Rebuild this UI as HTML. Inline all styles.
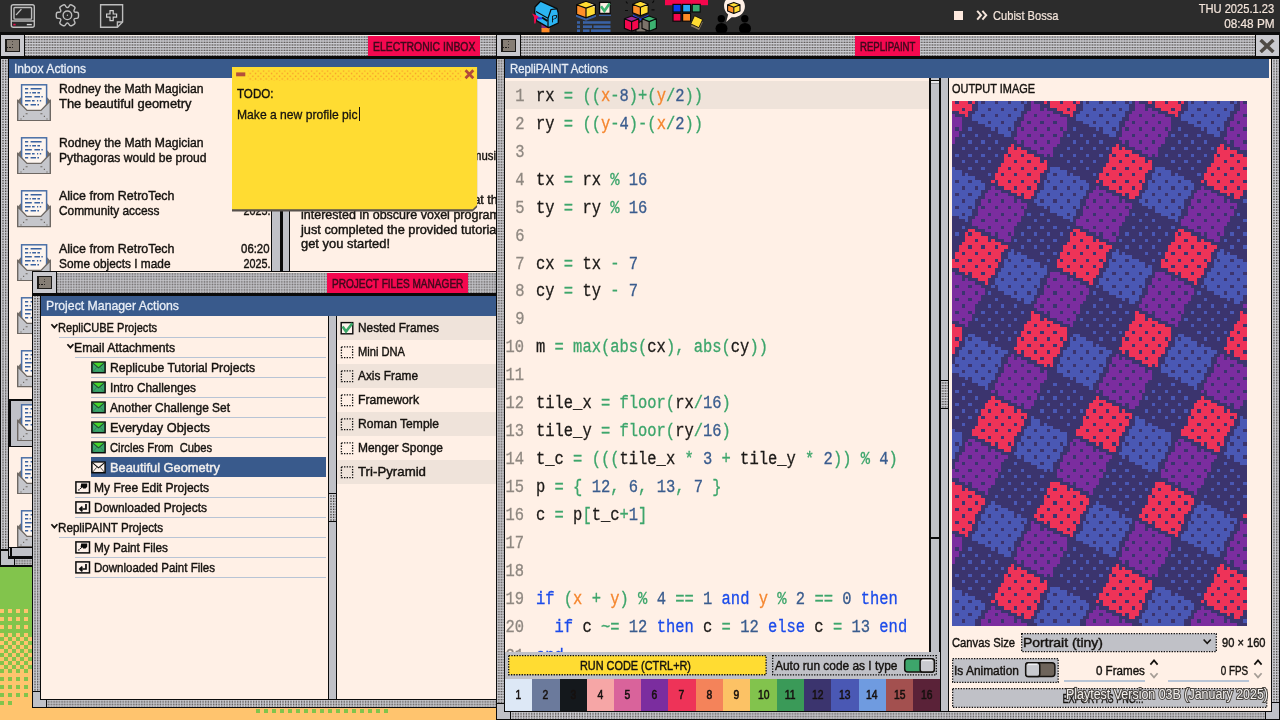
<!DOCTYPE html>
<html lang="en"><head><meta charset="utf-8"><title>Replicube desktop</title>
<style>
html,body{margin:0;padding:0}
body{width:1280px;height:720px;overflow:hidden;position:relative;background:#ffc46e;font-family:'Liberation Sans',sans-serif}
#r{position:absolute;left:0;top:0;width:1280px;height:720px;overflow:hidden;will-change:transform}
#r div,#r span.t,#r svg{position:absolute}
#r span.t{white-space:pre;display:block}
.cd span{white-space:pre}
</style></head>
<body><div id="r">
<svg width="0" height="0" style="left:0;top:0"><defs><pattern id="dp" width="8" height="8" patternUnits="userSpaceOnUse"><rect width="8" height="8" fill="#cacacf"/><rect x="1.333" y="1.333" width="1.333" height="1.333" fill="#423e3b"/><rect x="1.333" y="4.000" width="1.333" height="1.333" fill="#423e3b"/><rect x="1.333" y="6.667" width="1.333" height="1.333" fill="#423e3b"/><rect x="4.000" y="1.333" width="1.333" height="1.333" fill="#423e3b"/><rect x="4.000" y="4.000" width="1.333" height="1.333" fill="#423e3b"/><rect x="4.000" y="6.667" width="1.333" height="1.333" fill="#423e3b"/><rect x="6.667" y="1.333" width="1.333" height="1.333" fill="#423e3b"/><rect x="6.667" y="4.000" width="1.333" height="1.333" fill="#423e3b"/><rect x="6.667" y="6.667" width="1.333" height="1.333" fill="#423e3b"/></pattern></defs></svg>
<div style="left:0px;top:560px;width:500px;height:160px;background:#82c44c;"></div>
<div style="left:0px;top:637px;width:500px;height:100px;background:#ffc46e;"></div>
<svg style="left:0;top:600px" width="500" height="120" viewBox="0 600 500 120" shape-rendering="crispEdges"><rect x="0" y="609" width="4" height="4" fill="#ffc46e"/><rect x="8" y="609" width="4" height="4" fill="#ffc46e"/><rect x="16" y="609" width="4" height="4" fill="#ffc46e"/><rect x="24" y="609" width="4" height="4" fill="#ffc46e"/><rect x="0" y="617" width="4" height="4" fill="#ffc46e"/><rect x="8" y="617" width="4" height="4" fill="#ffc46e"/><rect x="16" y="617" width="4" height="4" fill="#ffc46e"/><rect x="24" y="617" width="4" height="4" fill="#ffc46e"/><rect x="0" y="625" width="4" height="4" fill="#ffc46e"/><rect x="8" y="625" width="4" height="4" fill="#ffc46e"/><rect x="16" y="625" width="4" height="4" fill="#ffc46e"/><rect x="24" y="625" width="4" height="4" fill="#ffc46e"/><rect x="0" y="633" width="4" height="4" fill="#ffc46e"/><rect x="8" y="633" width="4" height="4" fill="#ffc46e"/><rect x="16" y="633" width="4" height="4" fill="#ffc46e"/><rect x="24" y="633" width="4" height="4" fill="#ffc46e"/><rect x="0" y="637" width="4" height="4" fill="#82c44c"/><rect x="8" y="637" width="4" height="4" fill="#82c44c"/><rect x="16" y="637" width="4" height="4" fill="#82c44c"/><rect x="24" y="637" width="4" height="4" fill="#82c44c"/><rect x="4" y="641" width="4" height="4" fill="#82c44c"/><rect x="12" y="641" width="4" height="4" fill="#82c44c"/><rect x="20" y="641" width="4" height="4" fill="#82c44c"/><rect x="28" y="641" width="4" height="4" fill="#82c44c"/><rect x="0" y="645" width="4" height="4" fill="#82c44c"/><rect x="8" y="645" width="4" height="4" fill="#82c44c"/><rect x="16" y="645" width="4" height="4" fill="#82c44c"/><rect x="24" y="645" width="4" height="4" fill="#82c44c"/><rect x="4" y="649" width="4" height="4" fill="#82c44c"/><rect x="12" y="649" width="4" height="4" fill="#82c44c"/><rect x="20" y="649" width="4" height="4" fill="#82c44c"/><rect x="28" y="649" width="4" height="4" fill="#82c44c"/><rect x="0" y="653" width="4" height="4" fill="#82c44c"/><rect x="8" y="653" width="4" height="4" fill="#82c44c"/><rect x="16" y="653" width="4" height="4" fill="#82c44c"/><rect x="24" y="653" width="4" height="4" fill="#82c44c"/><rect x="4" y="657" width="4" height="4" fill="#82c44c"/><rect x="12" y="657" width="4" height="4" fill="#82c44c"/><rect x="20" y="657" width="4" height="4" fill="#82c44c"/><rect x="28" y="657" width="4" height="4" fill="#82c44c"/><rect x="0" y="661" width="4" height="4" fill="#82c44c"/><rect x="8" y="661" width="4" height="4" fill="#82c44c"/><rect x="16" y="661" width="4" height="4" fill="#82c44c"/><rect x="24" y="661" width="4" height="4" fill="#82c44c"/><rect x="4" y="665" width="4" height="4" fill="#82c44c"/><rect x="12" y="665" width="4" height="4" fill="#82c44c"/><rect x="20" y="665" width="4" height="4" fill="#82c44c"/><rect x="28" y="665" width="4" height="4" fill="#82c44c"/><rect x="0" y="669" width="4" height="4" fill="#82c44c"/><rect x="8" y="669" width="4" height="4" fill="#82c44c"/><rect x="16" y="669" width="4" height="4" fill="#82c44c"/><rect x="24" y="669" width="4" height="4" fill="#82c44c"/><rect x="0" y="677" width="4" height="4" fill="#82c44c"/><rect x="8" y="677" width="4" height="4" fill="#82c44c"/><rect x="16" y="677" width="4" height="4" fill="#82c44c"/><rect x="24" y="677" width="4" height="4" fill="#82c44c"/><rect x="0" y="685" width="4" height="4" fill="#82c44c"/><rect x="8" y="685" width="4" height="4" fill="#82c44c"/><rect x="16" y="685" width="4" height="4" fill="#82c44c"/><rect x="24" y="685" width="4" height="4" fill="#82c44c"/><rect x="0" y="693" width="4" height="4" fill="#82c44c"/><rect x="8" y="693" width="4" height="4" fill="#82c44c"/><rect x="16" y="693" width="4" height="4" fill="#82c44c"/><rect x="24" y="693" width="4" height="4" fill="#82c44c"/><rect x="0" y="701" width="4" height="4" fill="#82c44c"/><rect x="8" y="701" width="4" height="4" fill="#82c44c"/><rect x="256" y="709" width="4" height="3.6" fill="#82c44c"/><rect x="264" y="709" width="4" height="3.6" fill="#82c44c"/><rect x="272" y="709" width="4" height="3.6" fill="#82c44c"/><rect x="280" y="709" width="4" height="3.6" fill="#82c44c"/><rect x="288" y="709" width="4" height="3.6" fill="#82c44c"/><rect x="296" y="709" width="4" height="3.6" fill="#82c44c"/><rect x="304" y="709" width="4" height="3.6" fill="#82c44c"/><rect x="312" y="709" width="4" height="3.6" fill="#82c44c"/><rect x="320" y="709" width="4" height="3.6" fill="#82c44c"/><rect x="328" y="709" width="4" height="3.6" fill="#82c44c"/><rect x="336" y="709" width="4" height="3.6" fill="#82c44c"/><rect x="344" y="709" width="4" height="3.6" fill="#82c44c"/><rect x="352" y="709" width="4" height="3.6" fill="#82c44c"/><rect x="360" y="709" width="4" height="3.6" fill="#82c44c"/><rect x="368" y="709" width="4" height="3.6" fill="#82c44c"/><rect x="376" y="709" width="4" height="3.6" fill="#82c44c"/><rect x="384" y="709" width="4" height="3.6" fill="#82c44c"/></svg>
<div style="left:0px;top:0px;width:1280px;height:32.2px;background:#2c2c2c;"></div>
<div style="left:0px;top:32.2px;width:1280px;height:2.5px;background:#0b0b0b;"></div>
<svg style="left:8px;top:0" width="32" height="32" viewBox="8 0 32 32" fill="none" stroke="#bdbdbd" stroke-width="1.4">
<rect x="11.3" y="4.7" width="23" height="22.6" rx="2"/><path d="M11.3 21H34.3"/><rect x="14" y="7.5" width="17.6" height="11.6" rx="0.8"/>
<path d="M16.4 14.6L21 9.6" stroke-linecap="round"/><path d="M26.8 24.6H31.8" stroke="#d8d8d8"/><path d="M13.3 24.6H15.6" stroke="#e8104e" stroke-width="1.6"/></svg>
<svg style="left:52px;top:0" width="32" height="32" viewBox="52 0 32 32" fill="none" stroke="#bdbdbd" stroke-width="1.4" stroke-linejoin="round">
<path d="M76.99 12.25Q78.51 12.32 78.51 14.59L78.51 16.01Q78.51 18.28 76.99 18.35L76.04 18.40Q74.53 18.47 74.22 19.01L74.02 19.35Q73.71 19.88 74.40 21.23L74.84 22.08Q75.53 23.43 73.57 24.56L72.34 25.28Q70.38 26.41 69.56 25.13L69.04 24.33Q68.22 23.06 67.60 23.06L67.20 23.06Q66.58 23.06 65.76 24.33L65.24 25.13Q64.42 26.41 62.46 25.28L61.23 24.56Q59.27 23.43 59.96 22.08L60.40 21.23Q61.09 19.88 60.78 19.35L60.58 19.01Q60.27 18.47 58.76 18.40L57.81 18.35Q56.29 18.28 56.29 16.01L56.29 14.59Q56.29 12.32 57.81 12.25L58.76 12.20Q60.27 12.13 60.58 11.59L60.78 11.25Q61.09 10.72 60.40 9.37L59.96 8.52Q59.27 7.17 61.23 6.04L62.46 5.32Q64.42 4.19 65.24 5.47L65.76 6.27Q66.58 7.54 67.20 7.54L67.60 7.54Q68.22 7.54 69.04 6.27L69.56 5.47Q70.38 4.19 72.34 5.32L73.57 6.04Q75.53 7.17 74.84 8.52L74.40 9.37Q73.71 10.72 74.02 11.25L74.22 11.59Q74.53 12.13 76.04 12.20Z"/><circle cx="67.4" cy="15.3" r="4.3"/><circle cx="67.4" cy="15.3" r="0.7" fill="#bdbdbd" stroke="none"/></svg>
<svg style="left:96px;top:0" width="32" height="32" viewBox="96 0 32 32" fill="none" stroke="#bdbdbd" stroke-width="1.4">
<path d="M100.6 4.7H122.6V22L117.4 27.3H100.6Z"/><path d="M122.6 22H117.4V27.3" /><path d="M110 10.6h3.2v3.4h3.4v3.2h-3.4v3.4H110v-3.4h-3.4V14H110Z" stroke="#d0d0d0" stroke-width="1.2"/></svg>
<svg style="left:528px;top:0" width="36" height="33" viewBox="528 0 36 33">
<rect x="541.5" y="24" width="8" height="5" fill="#8b2a7a"/><rect x="541.5" y="28" width="8" height="4.3" fill="#ff8a25"/>
<path d="M535 7L540.5 1.2L557 8.6L558.3 13V23L548.5 27.6L536.5 20.6L534.6 12Z" fill="#2bb5f4" stroke="#0a0a0a" stroke-width="1.3" stroke-linejoin="round"/>
<path d="M536 11.5L548 18.3V27.2M548 18.3L551 9.5L557 8.8" fill="none" stroke="#0a0a0a" stroke-width="1.2"/>
<path d="M542 17.5L547.5 21" stroke="#0a0a0a" stroke-width="2"/>
<path d="M532 13.5L537 15.5L541 18.5L539.5 19.5L536.5 18.5L535.5 23.5L534.2 23.5L534 17Z" fill="#f5074d"/><rect x="537.5" y="17.3" width="4.6" height="2" fill="#1f3bf0"/>
<text x="551.2" y="21.8" font-family="Liberation Sans, sans-serif" font-size="9.5" fill="#0a0a0a" transform="skewY(-18)" style="transform-box:fill-box;transform-origin:center">P</text>
</svg>
<svg style="left:572px;top:0" width="44" height="33" viewBox="572 0 44 33"><path d="M576 14.6L586 18.6L596 14.6V16.8L586 20.8L576 16.8Z" fill="#3a62a4"/><path d="M576.6 4.7L586.0 8.1V17.7L576.6 14.3Z" fill="#ff8f28"/><path d="M595.4 4.7L586.0 8.1V17.7L595.4 14.3Z" fill="#ffdc32"/><path d="M586.0 1.3L595.4 4.7L586.0 8.1L576.6 4.7Z" fill="#ffdc32"/><path d="M587.9 2.3L595.4 4.7V8.5L591.6 4.7Z" fill="#fff0e6"/><path d="M586.0 1.3L595.4 4.7L586.0 8.1L576.6 4.7ZM576.6 4.7L586.0 8.1V17.7L576.6 14.3ZM595.4 4.7L586.0 8.1V17.7L595.4 14.3Z" fill="none" stroke="#0a0a0a" stroke-width="1.2" stroke-linejoin="round"/><rect x="599.6" y="2.4" width="10.6" height="11" fill="#fff0e6" stroke="#0a0a0a" stroke-width="1.3"/><path d="M601 6.3L604.4 11L609.6 3.6" fill="none" stroke="#3cb371" stroke-width="2.6"/><path d="M599 15.4H611" stroke="#3a62a4" stroke-width="1.3"/><rect x="577" y="21.2" width="3" height="2.6" fill="#3a62a4"/><rect x="583" y="21.2" width="27.5" height="2.6" fill="#3a62a4"/><rect x="583" y="21.2" width="1" height="2.6" fill="#3a62a4"/><rect x="577" y="25.4" width="3" height="2.6" fill="#3a62a4"/><rect x="583" y="25.4" width="9" height="2.6" fill="#3a62a4"/><rect x="593.5" y="25.4" width="17" height="2.6" fill="#3a62a4"/><rect x="577" y="29.4" width="3" height="2.6" fill="#3a62a4"/><rect x="583" y="29.4" width="6.5" height="2.6" fill="#3a62a4"/><rect x="591" y="29.4" width="19.5" height="2.6" fill="#3a62a4"/></svg>
<svg style="left:618px;top:0" width="44" height="33" viewBox="618 0 44 33"><path d="M625 10.5h3M651.5 9.8h3M626 1.5l1.5 2M654 0.5l-1.5 2.5" stroke="#0a0a0a" stroke-width="1.2"/><path d="M636 24L641 21.5L646 24V32H636Z" fill="#7b726a" stroke="#0a0a0a" stroke-width="1"/><path d="M633 14.5L640.5 18.5L648.5 14.5V17L640.5 20.5L633 17Z" fill="#1f3bf0"/><path d="M632.6 4.3L640.4 7.3V15.9L632.6 12.9Z" fill="#ff8f28"/><path d="M648.2 4.3L640.4 7.3V15.9L648.2 12.9Z" fill="#ffdc32"/><path d="M640.4 1.3L648.2 4.3L640.4 7.3L632.6 4.3Z" fill="#ffdc32"/><path d="M642.0 2.2L648.2 4.3V7.7L645.1 4.3Z" fill="#fff0e6"/><path d="M640.4 1.3L648.2 4.3L640.4 7.3L632.6 4.3ZM632.6 4.3L640.4 7.3V15.9L632.6 12.9ZM648.2 4.3L640.4 7.3V15.9L648.2 12.9Z" fill="none" stroke="#0a0a0a" stroke-width="1.2" stroke-linejoin="round"/><path d="M624.4 18.8L631.6 21.6V31.2L624.4 28.4Z" fill="#f5074d"/><path d="M638.8 18.8L631.6 21.6V31.2L638.8 28.4Z" fill="#f5074d"/><path d="M631.6 16.0L638.8 18.8L631.6 21.6L624.4 18.8Z" fill="#a02890"/><path d="M631.6 16.0L638.8 18.8L631.6 21.6L624.4 18.8ZM624.4 18.8L631.6 21.6V31.2L624.4 28.4ZM638.8 18.8L631.6 21.6V31.2L638.8 28.4Z" fill="none" stroke="#0a0a0a" stroke-width="1.2" stroke-linejoin="round"/><path d="M642.0 18.8L649.2 21.6V31.2L642.0 28.4Z" fill="#7b726a"/><path d="M656.4 18.8L649.2 21.6V31.2L656.4 28.4Z" fill="#3cb371"/><path d="M649.2 16.0L656.4 18.8L649.2 21.6L642.0 18.8Z" fill="#3cb371"/><path d="M649.2 16.0L656.4 18.8L649.2 21.6L642.0 18.8ZM642.0 18.8L649.2 21.6V31.2L642.0 28.4ZM656.4 18.8L649.2 21.6V31.2L656.4 28.4Z" fill="none" stroke="#0a0a0a" stroke-width="1.2" stroke-linejoin="round"/></svg>
<svg style="left:662px;top:0" width="50" height="33" viewBox="662 0 50 33">
<rect x="665" y="0" width="43" height="5.2" fill="#f5074d"/>
<g stroke="#0a0a0a" stroke-width="1.2"><rect x="673" y="4.4" width="8" height="7.6" fill="#0a3cf0"/><rect x="682.6" y="4.4" width="8" height="7.6" fill="#29a7f5"/><rect x="692.2" y="4.4" width="8" height="7.6" fill="#3aa870"/>
<rect x="673" y="13.4" width="8" height="7.8" fill="#f5074d"/><rect x="682.6" y="13.4" width="8" height="7.8" fill="#ff8a25"/></g>
<rect x="692.4" y="19.6" width="9" height="9" fill="#8a7a62" transform="rotate(25 696.9 24.1)"/>
<rect x="692.2" y="17.2" width="9" height="9" fill="#ffdc32" stroke="#0a0a0a" stroke-width="0.8" transform="rotate(25 696.7 21.7)"/>
</svg>
<svg style="left:712px;top:0" width="44" height="33" viewBox="712 0 44 33"><g fill="#000"><circle cx="721.3" cy="18.8" r="3.7"/><ellipse cx="721.5" cy="28.5" rx="6" ry="5.6"/><circle cx="744.8" cy="18.8" r="3.7"/><ellipse cx="745" cy="28.5" rx="6" ry="5.6"/></g><path d="M726.2 22L728.2 14.6C721.5 9 722.5 -3.5 734 -3.5C745.5 -3.5 747.5 8 742 13.8C738.5 17.5 733.5 17.6 731.6 17.2Z" fill="#fff0e6"/><path d="M727.6 4.8L733.8 7.2V13.4L727.6 11.0Z" fill="#ff8f28"/><path d="M740.0 4.8L733.8 7.2V13.4L740.0 11.0Z" fill="#ffdc32"/><path d="M733.8 2.4L740.0 4.8L733.8 7.2L727.6 4.8Z" fill="#ffdc32"/><path d="M733.8 2.4L740.0 4.8L733.8 7.2L727.6 4.8ZM727.6 4.8L733.8 7.2V13.4L727.6 11.0ZM740.0 4.8L733.8 7.2V13.4L740.0 11.0Z" fill="none" stroke="#0a0a0a" stroke-width="1.1" stroke-linejoin="round"/></svg>
<div style="left:954.2px;top:10.7px;width:8.6px;height:9.2px;background:#fde9de;"></div>
<svg style="left:975px;top:8px" width="16" height="14" viewBox="975 8 16 14"><path d="M977.2 10.8L981 15.2L977.2 19.6M982.4 10.8L986.2 15.2L982.4 19.6" fill="none" stroke="#f5e6dc" stroke-width="2"/></svg>
<span class="t" style="left:992.84px;top:8.83px;font:normal 13px/1 'Liberation Sans', sans-serif;color:#f5e6dc;transform:scaleX(0.8552);transform-origin:left top;-webkit-text-stroke:0.2px #f5e6dc;">Cubist Bossa</span>
<span class="t" style="left:1186.33px;top:2.43px;font:normal 13px/1 'Liberation Sans', sans-serif;color:#f5e6dc;transform:scaleX(0.8563);transform-origin:right top;-webkit-text-stroke:0.2px #f5e6dc;">THU 2025.1.23</span>
<span class="t" style="left:1218.84px;top:16.63px;font:normal 13px/1 'Liberation Sans', sans-serif;color:#f5e6dc;transform:scaleX(0.9074);transform-origin:right top;-webkit-text-stroke:0.2px #f5e6dc;">08:48 PM</span>
<div style="left:0px;top:33.3333px;width:520px;height:533.333px;background:#0b0b0b;"></div>
<svg style="left:1.33px;top:57.33px;" width="6.67" height="508.00" viewBox="0.000 1.333 6.67 508.00"><rect x="0" y="0" width="10.67" height="512.00" fill="url(#dp)"/></svg>
<svg style="left:512.00px;top:57.33px;" width="6.67" height="508.00" viewBox="2.667 1.333 6.67 508.00"><rect x="0" y="0" width="10.67" height="512.00" fill="url(#dp)"/></svg>
<svg style="left:1.33px;top:558.67px;" width="517.33" height="6.67" viewBox="0.000 2.667 517.33 6.67"><rect x="0" y="0" width="521.33" height="10.67" fill="url(#dp)"/></svg>
<svg style="left:25.33px;top:34.67px;" width="493.33" height="21.33" viewBox="1.333 0.000 493.33 21.33"><rect x="0" y="0" width="497.33" height="25.33" fill="url(#dp)"/></svg>
<div style="left:1.33333px;top:34.6667px;width:517.333px;height:0.9px;background:#f1e9e2;"></div>
<div style="left:1.33333px;top:56px;width:517.333px;height:2.66667px;background:#0b0b0b;"></div>
<div style="left:8px;top:58.6667px;width:504px;height:500px;background:#0b0b0b;"></div>
<div style="left:9.33333px;top:58.6667px;width:501.333px;height:498.667px;background:#fff0e6;"></div>
<div style="left:1.33333px;top:34.6667px;width:22.6667px;height:21.3333px;background:#cacacf;"></div>
<div style="left:24px;top:34.6667px;width:1.33333px;height:21.3333px;background:#0b0b0b;"></div>
<div style="left:5.33333px;top:38.6667px;width:14.6667px;height:13.3333px;background:#1d1b19;"></div>
<div style="left:6.66667px;top:40px;width:12px;height:10.6667px;background:#867e75;"></div>
<div style="left:12px;top:41.3333px;width:1.33333px;height:1.06667px;background:#4a443f;"></div>
<div style="left:12px;top:44px;width:1.33333px;height:1.06667px;background:#3a3632;"></div>
<div style="left:12px;top:46.6667px;width:1.33333px;height:1.06667px;background:#2a2724;"></div>
<div style="left:9.33333px;top:46.6667px;width:1.33333px;height:1.06667px;background:#1d1b19;"></div>
<div style="left:6.66667px;top:46.6667px;width:1.33333px;height:1.06667px;background:#1d1b19;"></div>
<div style="left:368px;top:36px;width:112px;height:20px;background:#f4084f;"></div>
<span class="t" style="left:372.75px;top:39.87px;font:normal 13px/1 'Liberation Sans', sans-serif;color:#3d0a1c;transform:scaleX(0.8009);transform-origin:left top;-webkit-text-stroke:0.5px #3d0a1c;">ELECTRONIC INBOX</span>
<div style="left:9.33333px;top:58.6667px;width:500.667px;height:20px;background:#395a8c;"></div>
<span class="t" style="left:14.28px;top:61.80px;font:normal 13px/1 'Liberation Sans', sans-serif;color:#e9eef6;transform:scaleX(0.9311);transform-origin:left top;-webkit-text-stroke:0.3px #e9eef6;">Inbox Actions</span>
<svg width="0" height="0" style="left:0;top:0"><defs><symbol id="ml" viewBox="0 0 34 37.4">
<path d="M0.7 16.8L4.6 12.6H29.4L33.3 16.8V30H0.7Z" fill="#756e68"/>
<rect x="4.6" y="0.8" width="25" height="27" fill="#fdf5ef" stroke="#4a6ea6" stroke-width="1.5"/>
<path d="M8 4.8h3.2M13.6 4.8h11M8 8.8h3.2M12.6 8.8h1.2M15.2 8.8h3.8M20.4 8.8h2.6M8 12.8h6.8M17.4 12.8h5.6M24.4 12.8h1.4M8 16.8h5.6M15 16.8h2.6M20 16.8h1.2M22.8 16.8h1.4M8 20.8h3.2M13.6 20.8h5.4M20.4 20.8h1.6" stroke="#3a62a0" stroke-width="1.4" fill="none"/>
<path d="M0.7 16.8L10 26.4H24L33.3 16.8V36.7H0.7Z" fill="#c5c6cb" stroke="#6e6863" stroke-width="1.4" stroke-linejoin="miter"/>
<path d="M3.4 34.4h1.2v1.2H3.4zM6 31.8h1.2V33H6zM8.6 29.2h2v1h-2zM29.4 34.4h1.2v1.2h-1.2zM26.8 31.8H28V33h-1.2zM23.4 29.2h2v1h-2z" fill="#6e6863"/>
</symbol></defs></svg>
<div style="left:9px;top:78px;width:262.3px;height:468.5px;background:#fff0e6;"></div>
<div style="left:8.8px;top:398.9px;width:262.5px;height:48.1px;background:#0b0b0b;"></div>
<div style="left:10.8px;top:400.5px;width:260.5px;height:45px;background:#c0c1c7;"></div>
<svg style="left:17px;top:83.75px" width="34" height="37.4"><use href="#ml"/></svg>
<span class="t" style="left:59.05px;top:82.38px;font:normal 13px/1 'Liberation Sans', sans-serif;color:#15120f;transform:scaleX(0.9343);transform-origin:left top;-webkit-text-stroke:0.42px #15120f;">Rodney the Math Magician</span>
<span class="t" style="left:59.05px;top:97.18px;font:normal 13px/1 'Liberation Sans', sans-serif;color:#15120f;transform:scaleX(0.9965);transform-origin:left top;-webkit-text-stroke:0.42px #15120f;">The beautiful geometry</span>
<span class="t" style="left:236.75px;top:82.38px;font:normal 13px/1 'Liberation Sans', sans-serif;color:#15120f;transform:scaleX(0.8757);transform-origin:right top;-webkit-text-stroke:0.42px #15120f;">06:20</span>
<span class="t" style="left:237.75px;top:97.18px;font:normal 13px/1 'Liberation Sans', sans-serif;color:#15120f;transform:scaleX(0.8296);transform-origin:right top;-webkit-text-stroke:0.42px #15120f;">2025.</span>
<svg style="left:17px;top:137.08px" width="34" height="37.4"><use href="#ml"/></svg>
<span class="t" style="left:59.05px;top:135.72px;font:normal 13px/1 'Liberation Sans', sans-serif;color:#15120f;transform:scaleX(0.9343);transform-origin:left top;-webkit-text-stroke:0.42px #15120f;">Rodney the Math Magician</span>
<span class="t" style="left:59.05px;top:150.52px;font:normal 13px/1 'Liberation Sans', sans-serif;color:#15120f;transform:scaleX(0.9319);transform-origin:left top;-webkit-text-stroke:0.42px #15120f;">Pythagoras would be proud</span>
<span class="t" style="left:236.75px;top:135.72px;font:normal 13px/1 'Liberation Sans', sans-serif;color:#15120f;transform:scaleX(0.8757);transform-origin:right top;-webkit-text-stroke:0.42px #15120f;">06:20</span>
<span class="t" style="left:237.75px;top:150.52px;font:normal 13px/1 'Liberation Sans', sans-serif;color:#15120f;transform:scaleX(0.8296);transform-origin:right top;-webkit-text-stroke:0.42px #15120f;">2025.</span>
<svg style="left:17px;top:190.42px" width="34" height="37.4"><use href="#ml"/></svg>
<span class="t" style="left:59.05px;top:189.05px;font:normal 13px/1 'Liberation Sans', sans-serif;color:#15120f;transform:scaleX(0.9573);transform-origin:left top;-webkit-text-stroke:0.42px #15120f;">Alice from RetroTech</span>
<span class="t" style="left:59.05px;top:203.85px;font:normal 13px/1 'Liberation Sans', sans-serif;color:#15120f;transform:scaleX(0.9152);transform-origin:left top;-webkit-text-stroke:0.42px #15120f;">Community access</span>
<span class="t" style="left:236.75px;top:189.05px;font:normal 13px/1 'Liberation Sans', sans-serif;color:#15120f;transform:scaleX(0.8757);transform-origin:right top;-webkit-text-stroke:0.42px #15120f;">06:20</span>
<span class="t" style="left:237.75px;top:203.85px;font:normal 13px/1 'Liberation Sans', sans-serif;color:#15120f;transform:scaleX(0.8296);transform-origin:right top;-webkit-text-stroke:0.42px #15120f;">2025.</span>
<svg style="left:17px;top:243.75px" width="34" height="37.4"><use href="#ml"/></svg>
<span class="t" style="left:59.05px;top:242.38px;font:normal 13px/1 'Liberation Sans', sans-serif;color:#15120f;transform:scaleX(0.9573);transform-origin:left top;-webkit-text-stroke:0.42px #15120f;">Alice from RetroTech</span>
<span class="t" style="left:59.05px;top:257.18px;font:normal 13px/1 'Liberation Sans', sans-serif;color:#15120f;transform:scaleX(0.9130);transform-origin:left top;-webkit-text-stroke:0.42px #15120f;">Some objects I made</span>
<span class="t" style="left:236.75px;top:242.38px;font:normal 13px/1 'Liberation Sans', sans-serif;color:#15120f;transform:scaleX(0.8757);transform-origin:right top;-webkit-text-stroke:0.42px #15120f;">06:20</span>
<span class="t" style="left:237.75px;top:257.18px;font:normal 13px/1 'Liberation Sans', sans-serif;color:#15120f;transform:scaleX(0.8296);transform-origin:right top;-webkit-text-stroke:0.42px #15120f;">2025.</span>
<svg style="left:17px;top:297.08px" width="34" height="37.4"><use href="#ml"/></svg>
<span class="t" style="left:59.05px;top:295.72px;font:normal 13px/1 'Liberation Sans', sans-serif;color:#15120f;transform:scaleX(0.9573);transform-origin:left top;-webkit-text-stroke:0.42px #15120f;">Alice from RetroTech</span>
<span class="t" style="left:59.05px;top:310.52px;font:normal 13px/1 'Liberation Sans', sans-serif;color:#15120f;transform:scaleX(0.9383);transform-origin:left top;-webkit-text-stroke:0.42px #15120f;">Welcome aboard</span>
<span class="t" style="left:236.75px;top:295.72px;font:normal 13px/1 'Liberation Sans', sans-serif;color:#15120f;transform:scaleX(0.8757);transform-origin:right top;-webkit-text-stroke:0.42px #15120f;">06:20</span>
<span class="t" style="left:237.75px;top:310.52px;font:normal 13px/1 'Liberation Sans', sans-serif;color:#15120f;transform:scaleX(0.8296);transform-origin:right top;-webkit-text-stroke:0.42px #15120f;">2025.</span>
<svg style="left:17px;top:350.41px" width="34" height="37.4"><use href="#ml"/></svg>
<span class="t" style="left:59.05px;top:349.05px;font:normal 13px/1 'Liberation Sans', sans-serif;color:#15120f;transform:scaleX(0.9343);transform-origin:left top;-webkit-text-stroke:0.42px #15120f;">Rodney the Math Magician</span>
<span class="t" style="left:59.05px;top:363.85px;font:normal 13px/1 'Liberation Sans', sans-serif;color:#15120f;transform:scaleX(0.9662);transform-origin:left top;-webkit-text-stroke:0.42px #15120f;">Circles from cubes</span>
<span class="t" style="left:236.75px;top:349.05px;font:normal 13px/1 'Liberation Sans', sans-serif;color:#15120f;transform:scaleX(0.8757);transform-origin:right top;-webkit-text-stroke:0.42px #15120f;">06:20</span>
<span class="t" style="left:237.75px;top:363.85px;font:normal 13px/1 'Liberation Sans', sans-serif;color:#15120f;transform:scaleX(0.8296);transform-origin:right top;-webkit-text-stroke:0.42px #15120f;">2025.</span>
<svg style="left:17px;top:403.75px" width="34" height="37.4"><use href="#ml"/></svg>
<span class="t" style="left:59.05px;top:402.38px;font:normal 13px/1 'Liberation Sans', sans-serif;color:#15120f;transform:scaleX(0.9573);transform-origin:left top;-webkit-text-stroke:0.42px #15120f;">Alice from RetroTech</span>
<span class="t" style="left:59.05px;top:417.18px;font:normal 13px/1 'Liberation Sans', sans-serif;color:#15120f;transform:scaleX(0.9697);transform-origin:left top;-webkit-text-stroke:0.42px #15120f;">Everyday objects</span>
<span class="t" style="left:236.75px;top:402.38px;font:normal 13px/1 'Liberation Sans', sans-serif;color:#15120f;transform:scaleX(0.8757);transform-origin:right top;-webkit-text-stroke:0.42px #15120f;">06:20</span>
<span class="t" style="left:237.75px;top:417.18px;font:normal 13px/1 'Liberation Sans', sans-serif;color:#15120f;transform:scaleX(0.8296);transform-origin:right top;-webkit-text-stroke:0.42px #15120f;">2025.</span>
<svg style="left:17px;top:457.08px" width="34" height="37.4"><use href="#ml"/></svg>
<span class="t" style="left:59.05px;top:455.71px;font:normal 13px/1 'Liberation Sans', sans-serif;color:#15120f;transform:scaleX(0.9573);transform-origin:left top;-webkit-text-stroke:0.42px #15120f;">Alice from RetroTech</span>
<span class="t" style="left:59.05px;top:470.51px;font:normal 13px/1 'Liberation Sans', sans-serif;color:#15120f;transform:scaleX(0.9621);transform-origin:left top;-webkit-text-stroke:0.42px #15120f;">Another challenge set</span>
<span class="t" style="left:236.75px;top:455.71px;font:normal 13px/1 'Liberation Sans', sans-serif;color:#15120f;transform:scaleX(0.8757);transform-origin:right top;-webkit-text-stroke:0.42px #15120f;">06:20</span>
<span class="t" style="left:237.75px;top:470.51px;font:normal 13px/1 'Liberation Sans', sans-serif;color:#15120f;transform:scaleX(0.8296);transform-origin:right top;-webkit-text-stroke:0.42px #15120f;">2025.</span>
<svg style="left:17px;top:510.41px" width="34" height="37.4"><use href="#ml"/></svg>
<span class="t" style="left:59.05px;top:509.05px;font:normal 13px/1 'Liberation Sans', sans-serif;color:#15120f;transform:scaleX(0.9573);transform-origin:left top;-webkit-text-stroke:0.42px #15120f;">Alice from RetroTech</span>
<span class="t" style="left:59.05px;top:523.85px;font:normal 13px/1 'Liberation Sans', sans-serif;color:#15120f;transform:scaleX(0.9588);transform-origin:left top;-webkit-text-stroke:0.42px #15120f;">Intro challenges</span>
<span class="t" style="left:236.75px;top:509.05px;font:normal 13px/1 'Liberation Sans', sans-serif;color:#15120f;transform:scaleX(0.8757);transform-origin:right top;-webkit-text-stroke:0.42px #15120f;">06:20</span>
<span class="t" style="left:237.75px;top:523.85px;font:normal 13px/1 'Liberation Sans', sans-serif;color:#15120f;transform:scaleX(0.8296);transform-origin:right top;-webkit-text-stroke:0.42px #15120f;">2025.</span>
<div style="left:271.2px;top:78px;width:19.2px;height:468.5px;background:#0b0b0b;"></div>
<div style="left:272.4px;top:78px;width:7.7px;height:468.5px;background:#c0c1c7;"></div>
<div style="left:282.5px;top:78px;width:6.6px;height:468.5px;background:#c0c1c7;"></div>
<div style="left:9px;top:546.5px;width:281px;height:1.6px;background:#0b0b0b;"></div>
<div style="left:9px;top:548.1px;width:281px;height:8px;background:#c0c1c7;"></div>
<div style="left:10.4px;top:548.1px;width:1.5px;height:8px;background:#0b0b0b;"></div>
<div style="left:9px;top:556px;width:520px;height:2.3px;background:#0b0b0b;"></div>
<div style="left:1.33px;top:550.6px;width:6.67px;height:14.7px;background:#c0c1c7;"></div>
<div style="left:1.33px;top:558.67px;width:12.6px;height:6.67px;background:#c0c1c7;"></div>
<div style="left:1.33px;top:549.4px;width:6.67px;height:1.3px;background:#0b0b0b;"></div>
<div style="left:13.9px;top:558.67px;width:1.3px;height:6.67px;background:#0b0b0b;"></div>
<span class="t" style="left:329.78px;top:149.33px;font:normal 13px/1 'Liberation Sans', sans-serif;color:#15120f;transform:scaleX(0.8735);transform-origin:right top;-webkit-text-stroke:0.42px #15120f;">Welcome! Put on some music</span>
<span class="t" style="left:295.98px;top:193.33px;font:normal 13px/1 'Liberation Sans', sans-serif;color:#15120f;transform:scaleX(0.9572);transform-origin:right top;-webkit-text-stroke:0.42px #15120f;">Hi there! Rodney mentioned that th</span>
<span class="t" style="left:300.55px;top:208.03px;font:normal 13px/1 'Liberation Sans', sans-serif;color:#15120f;transform:scaleX(0.9629);transform-origin:left top;-webkit-text-stroke:0.42px #15120f;">interested in obscure voxel programming</span>
<span class="t" style="left:300.55px;top:222.73px;font:normal 13px/1 'Liberation Sans', sans-serif;color:#15120f;transform:scaleX(0.9837);transform-origin:left top;-webkit-text-stroke:0.42px #15120f;">just completed the provided tutorials</span>
<span class="t" style="left:300.55px;top:237.33px;font:normal 13px/1 'Liberation Sans', sans-serif;color:#15120f;transform:scaleX(0.9930);transform-origin:left top;-webkit-text-stroke:0.42px #15120f;">get you started!</span>
<div style="left:32px;top:270.667px;width:488px;height:437.333px;background:#0b0b0b;"></div>
<svg style="left:33.33px;top:294.67px;" width="6.67" height="412.00" viewBox="0.000 1.333 6.67 412.00"><rect x="0" y="0" width="10.67" height="416.00" fill="url(#dp)"/></svg>
<svg style="left:512.00px;top:294.67px;" width="6.67" height="412.00" viewBox="2.667 1.333 6.67 412.00"><rect x="0" y="0" width="10.67" height="416.00" fill="url(#dp)"/></svg>
<svg style="left:33.33px;top:700.00px;" width="485.33" height="6.67" viewBox="0.000 2.667 485.33 6.67"><rect x="0" y="0" width="489.33" height="10.67" fill="url(#dp)"/></svg>
<svg style="left:57.33px;top:272.00px;" width="461.33" height="21.33" viewBox="1.333 2.667 461.33 21.33"><rect x="0" y="0" width="465.33" height="25.33" fill="url(#dp)"/></svg>
<div style="left:33.3333px;top:272px;width:485.333px;height:0.9px;background:#f1e9e2;"></div>
<div style="left:33.3333px;top:293.333px;width:485.333px;height:2.66667px;background:#0b0b0b;"></div>
<div style="left:40px;top:296px;width:472px;height:404px;background:#0b0b0b;"></div>
<div style="left:41.3333px;top:296px;width:469.333px;height:402.667px;background:#fff0e6;"></div>
<div style="left:33.3333px;top:272px;width:22.6667px;height:21.3333px;background:#cacacf;"></div>
<div style="left:56px;top:272px;width:1.33333px;height:21.3333px;background:#0b0b0b;"></div>
<div style="left:37.3333px;top:276px;width:14.6667px;height:13.3333px;background:#1d1b19;"></div>
<div style="left:38.6667px;top:277.333px;width:12px;height:10.6667px;background:#867e75;"></div>
<div style="left:44px;top:278.667px;width:1.33333px;height:1.06667px;background:#4a443f;"></div>
<div style="left:44px;top:281.333px;width:1.33333px;height:1.06667px;background:#3a3632;"></div>
<div style="left:44px;top:284px;width:1.33333px;height:1.06667px;background:#2a2724;"></div>
<div style="left:41.3333px;top:284px;width:1.33333px;height:1.06667px;background:#1d1b19;"></div>
<div style="left:38.6667px;top:284px;width:1.33333px;height:1.06667px;background:#1d1b19;"></div>
<div style="left:327px;top:273.333px;width:141px;height:20px;background:#f4084f;"></div>
<span class="t" style="left:331.75px;top:277.20px;font:normal 13px/1 'Liberation Sans', sans-serif;color:#3d0a1c;transform:scaleX(0.7751);transform-origin:left top;-webkit-text-stroke:0.5px #3d0a1c;">PROJECT FILES MANAGER</span>
<div style="left:41.3333px;top:296px;width:468.667px;height:20px;background:#395a8c;"></div>
<span class="t" style="left:46.28px;top:299.13px;font:normal 13px/1 'Liberation Sans', sans-serif;color:#e9eef6;transform:scaleX(0.9439);transform-origin:left top;-webkit-text-stroke:0.3px #e9eef6;">Project Manager Actions</span>
<div style="left:41px;top:315.6px;width:287px;height:383.4px;background:#fff0e6;"></div>
<div style="left:328px;top:315.6px;width:9.2px;height:383.4px;background:#0b0b0b;"></div>
<div style="left:329.4px;top:315.6px;width:6.6px;height:383.4px;background:#c0c1c7;"></div>
<svg style="left:329.40px;top:494.00px;" width="6.60" height="26.67" viewBox="0.000 0.000 6.60 26.67"><rect x="0" y="0" width="10.60" height="30.67" fill="url(#dp)"/></svg>
<div style="left:329.4px;top:492.67px;width:6.6px;height:1.33px;background:#0b0b0b;"></div>
<div style="left:329.4px;top:520.67px;width:6.6px;height:1.33px;background:#0b0b0b;"></div>
<div style="left:337.2px;top:315.6px;width:190px;height:24px;background:#efe3da;"></div>
<svg style="left:340px;top:320.70px" width="15" height="14" viewBox="0 0 15 14"><rect x="1.2" y="1.6" width="11.6" height="11.2" fill="#fdf3ec" stroke="#0b0b0b" stroke-width="1.4"/><path d="M2.6 5.6L6 10.6L12.4 2.2" fill="none" stroke="#3aa767" stroke-width="2.6"/></svg>
<span class="t" style="left:357.85px;top:320.63px;font:normal 13px/1 'Liberation Sans', sans-serif;color:#15120f;transform:scaleX(0.9114);transform-origin:left top;-webkit-text-stroke:0.42px #15120f;">Nested Frames</span>
<svg style="left:340px;top:344.70px" width="15" height="14" viewBox="0 0 15 14"><rect x="1.4" y="1.8" width="11.2" height="10.8" fill="none" stroke="#0b0b0b" stroke-width="1.3" stroke-dasharray="1.33 1.33"/></svg>
<span class="t" style="left:357.85px;top:344.63px;font:normal 13px/1 'Liberation Sans', sans-serif;color:#15120f;transform:scaleX(0.8560);transform-origin:left top;-webkit-text-stroke:0.42px #15120f;">Mini DNA</span>
<div style="left:337.2px;top:363.6px;width:190px;height:24px;background:#efe3da;"></div>
<svg style="left:340px;top:368.70px" width="15" height="14" viewBox="0 0 15 14"><rect x="1.4" y="1.8" width="11.2" height="10.8" fill="none" stroke="#0b0b0b" stroke-width="1.3" stroke-dasharray="1.33 1.33"/></svg>
<span class="t" style="left:357.85px;top:368.63px;font:normal 13px/1 'Liberation Sans', sans-serif;color:#15120f;transform:scaleX(0.9128);transform-origin:left top;-webkit-text-stroke:0.42px #15120f;">Axis Frame</span>
<svg style="left:340px;top:392.70px" width="15" height="14" viewBox="0 0 15 14"><rect x="1.4" y="1.8" width="11.2" height="10.8" fill="none" stroke="#0b0b0b" stroke-width="1.3" stroke-dasharray="1.33 1.33"/></svg>
<span class="t" style="left:357.85px;top:392.63px;font:normal 13px/1 'Liberation Sans', sans-serif;color:#15120f;transform:scaleX(0.9382);transform-origin:left top;-webkit-text-stroke:0.42px #15120f;">Framework</span>
<div style="left:337.2px;top:411.6px;width:190px;height:24px;background:#efe3da;"></div>
<svg style="left:340px;top:416.70px" width="15" height="14" viewBox="0 0 15 14"><rect x="1.4" y="1.8" width="11.2" height="10.8" fill="none" stroke="#0b0b0b" stroke-width="1.3" stroke-dasharray="1.33 1.33"/></svg>
<span class="t" style="left:357.85px;top:416.63px;font:normal 13px/1 'Liberation Sans', sans-serif;color:#15120f;transform:scaleX(0.9289);transform-origin:left top;-webkit-text-stroke:0.42px #15120f;">Roman Temple</span>
<svg style="left:340px;top:440.70px" width="15" height="14" viewBox="0 0 15 14"><rect x="1.4" y="1.8" width="11.2" height="10.8" fill="none" stroke="#0b0b0b" stroke-width="1.3" stroke-dasharray="1.33 1.33"/></svg>
<span class="t" style="left:357.85px;top:440.63px;font:normal 13px/1 'Liberation Sans', sans-serif;color:#15120f;transform:scaleX(0.9188);transform-origin:left top;-webkit-text-stroke:0.42px #15120f;">Menger Sponge</span>
<div style="left:337.2px;top:459.6px;width:190px;height:24px;background:#efe3da;"></div>
<svg style="left:340px;top:464.70px" width="15" height="14" viewBox="0 0 15 14"><rect x="1.4" y="1.8" width="11.2" height="10.8" fill="none" stroke="#0b0b0b" stroke-width="1.3" stroke-dasharray="1.33 1.33"/></svg>
<span class="t" style="left:357.85px;top:464.63px;font:normal 13px/1 'Liberation Sans', sans-serif;color:#15120f;transform:scaleX(1.0197);transform-origin:left top;-webkit-text-stroke:0.42px #15120f;">Tri-Pyramid</span>
<div style="left:58.7px;top:336.7px;width:267.7px;height:1.3px;background:#b8c4d5;"></div>
<svg style="left:50.2px;top:321.8px" width="9" height="9" viewBox="0 0 9 9"><path d="M1.4 2.2L4.4 5.6L7.4 2.2" fill="none" stroke="#15120f" stroke-width="1.7"/></svg>
<span class="t" style="left:57.84px;top:321.03px;font:normal 13px/1 'Liberation Sans', sans-serif;color:#15120f;transform:scaleX(0.8510);transform-origin:left top;-webkit-text-stroke:0.42px #15120f;">RepliCUBE Projects</span>
<div style="left:75px;top:356.7px;width:251.4px;height:1.3px;background:#b8c4d5;"></div>
<svg style="left:66.2px;top:341.8px" width="9" height="9" viewBox="0 0 9 9"><path d="M1.4 2.2L4.4 5.6L7.4 2.2" fill="none" stroke="#15120f" stroke-width="1.7"/></svg>
<span class="t" style="left:73.84px;top:341.03px;font:normal 13px/1 'Liberation Sans', sans-serif;color:#15120f;transform:scaleX(0.9382);transform-origin:left top;-webkit-text-stroke:0.42px #15120f;">Email Attachments</span>
<div style="left:91px;top:376.7px;width:235.4px;height:1.3px;background:#b8c4d5;"></div>
<svg style="left:91.2px;top:361px" width="15" height="13" viewBox="0 0 15 13"><rect x="0.9" y="1.1" width="13.2" height="10.6" fill="#3aa56b" stroke="#0b0b0b" stroke-width="1.5"/><path d="M1.6 1.8L7.5 6.6L13.4 1.8Z" fill="#46d52d"/><path d="M1.6 1.8L7.5 6.8L13.4 1.8" fill="none" stroke="#1f4a30" stroke-width="1.1"/><path d="M1.8 11L5.6 6.4M13.2 11L9.4 6.4" stroke="#2c6e4a" stroke-width="0.9" opacity="0.75"/></svg>
<span class="t" style="left:109.95px;top:361.03px;font:normal 13px/1 'Liberation Sans', sans-serif;color:#15120f;transform:scaleX(0.9377);transform-origin:left top;-webkit-text-stroke:0.42px #15120f;">Replicube Tutorial Projects</span>
<div style="left:91px;top:396.7px;width:235.4px;height:1.3px;background:#b8c4d5;"></div>
<svg style="left:91.2px;top:381px" width="15" height="13" viewBox="0 0 15 13"><rect x="0.9" y="1.1" width="13.2" height="10.6" fill="#3aa56b" stroke="#0b0b0b" stroke-width="1.5"/><path d="M1.6 1.8L7.5 6.6L13.4 1.8Z" fill="#46d52d"/><path d="M1.6 1.8L7.5 6.8L13.4 1.8" fill="none" stroke="#1f4a30" stroke-width="1.1"/><path d="M1.8 11L5.6 6.4M13.2 11L9.4 6.4" stroke="#2c6e4a" stroke-width="0.9" opacity="0.75"/></svg>
<span class="t" style="left:109.95px;top:381.03px;font:normal 13px/1 'Liberation Sans', sans-serif;color:#15120f;transform:scaleX(0.9084);transform-origin:left top;-webkit-text-stroke:0.42px #15120f;">Intro Challenges</span>
<div style="left:91px;top:416.7px;width:235.4px;height:1.3px;background:#b8c4d5;"></div>
<svg style="left:91.2px;top:401px" width="15" height="13" viewBox="0 0 15 13"><rect x="0.9" y="1.1" width="13.2" height="10.6" fill="#3aa56b" stroke="#0b0b0b" stroke-width="1.5"/><path d="M1.6 1.8L7.5 6.6L13.4 1.8Z" fill="#46d52d"/><path d="M1.6 1.8L7.5 6.8L13.4 1.8" fill="none" stroke="#1f4a30" stroke-width="1.1"/><path d="M1.8 11L5.6 6.4M13.2 11L9.4 6.4" stroke="#2c6e4a" stroke-width="0.9" opacity="0.75"/></svg>
<span class="t" style="left:109.95px;top:401.03px;font:normal 13px/1 'Liberation Sans', sans-serif;color:#15120f;transform:scaleX(0.9173);transform-origin:left top;-webkit-text-stroke:0.42px #15120f;">Another Challenge Set</span>
<div style="left:91px;top:436.7px;width:235.4px;height:1.3px;background:#b8c4d5;"></div>
<svg style="left:91.2px;top:421px" width="15" height="13" viewBox="0 0 15 13"><rect x="0.9" y="1.1" width="13.2" height="10.6" fill="#3aa56b" stroke="#0b0b0b" stroke-width="1.5"/><path d="M1.6 1.8L7.5 6.6L13.4 1.8Z" fill="#46d52d"/><path d="M1.6 1.8L7.5 6.8L13.4 1.8" fill="none" stroke="#1f4a30" stroke-width="1.1"/><path d="M1.8 11L5.6 6.4M13.2 11L9.4 6.4" stroke="#2c6e4a" stroke-width="0.9" opacity="0.75"/></svg>
<span class="t" style="left:109.95px;top:421.03px;font:normal 13px/1 'Liberation Sans', sans-serif;color:#15120f;transform:scaleX(0.9816);transform-origin:left top;-webkit-text-stroke:0.42px #15120f;">Everyday Objects</span>
<div style="left:91px;top:456.7px;width:235.4px;height:1.3px;background:#b8c4d5;"></div>
<svg style="left:91.2px;top:441px" width="15" height="13" viewBox="0 0 15 13"><rect x="0.9" y="1.1" width="13.2" height="10.6" fill="#3aa56b" stroke="#0b0b0b" stroke-width="1.5"/><path d="M1.6 1.8L7.5 6.6L13.4 1.8Z" fill="#46d52d"/><path d="M1.6 1.8L7.5 6.8L13.4 1.8" fill="none" stroke="#1f4a30" stroke-width="1.1"/><path d="M1.8 11L5.6 6.4M13.2 11L9.4 6.4" stroke="#2c6e4a" stroke-width="0.9" opacity="0.75"/></svg>
<span class="t" style="left:109.95px;top:441.03px;font:normal 13px/1 'Liberation Sans', sans-serif;color:#15120f;transform:scaleX(0.8610);transform-origin:left top;-webkit-text-stroke:0.42px #15120f;">Circles From  Cubes</span>
<div style="left:90.8px;top:457.4px;width:235.6px;height:19.6px;background:#395a8c;"></div>
<svg style="left:91.2px;top:461px" width="15" height="13" viewBox="0 0 15 13"><rect x="0.9" y="1.1" width="13.2" height="10.6" fill="#fdf1ea" stroke="#0b0b0b" stroke-width="1.5"/><path d="M1.6 1.8L7.5 6.6L13.4 1.8Z" fill="#fdf1ea"/><path d="M1.6 1.8L7.5 6.8L13.4 1.8" fill="none" stroke="#0b0b0b" stroke-width="1.1"/><path d="M1.8 11L5.6 6.4M13.2 11L9.4 6.4" stroke="#0b0b0b" stroke-width="0.9" opacity="0.75"/></svg>
<span class="t" style="left:109.95px;top:461.03px;font:normal 13px/1 'Liberation Sans', sans-serif;color:#f3f0ee;transform:scaleX(0.9885);transform-origin:left top;-webkit-text-stroke:0.42px #f3f0ee;">Beautiful Geometry</span>
<div style="left:75px;top:496.7px;width:251.4px;height:1.3px;background:#b8c4d5;"></div>
<svg style="left:74.9px;top:480.8px" width="16" height="13.2" viewBox="0 0 16 13.2"><rect x="0.9" y="0.9" width="13.6" height="11" fill="#fdf1ea" stroke="#0b0b0b" stroke-width="1.5"/><path d="M6.2 2.6h6v3.2l-1.6 1.8h-2.4l-1.2-1.6h-1.4z" fill="#0b0b0b"/><rect x="3.2" y="8.4" width="1.2" height="1.2" fill="#0b0b0b"/><path d="M4.6 8.2l2.4-2" stroke="#0b0b0b" stroke-width="1"/></svg>
<span class="t" style="left:93.75px;top:481.03px;font:normal 13px/1 'Liberation Sans', sans-serif;color:#15120f;transform:scaleX(0.9254);transform-origin:left top;-webkit-text-stroke:0.42px #15120f;">My Free Edit Projects</span>
<div style="left:75px;top:516.7px;width:251.4px;height:1.3px;background:#b8c4d5;"></div>
<svg style="left:74.9px;top:500.8px" width="16" height="13.2" viewBox="0 0 16 13.2"><rect x="0.9" y="0.9" width="13.6" height="11" fill="#fdf1ea" stroke="#0b0b0b" stroke-width="1.5"/><path d="M11 3v5H5.2M7.4 5.6L4.8 8L7.4 10.4" fill="none" stroke="#0b0b0b" stroke-width="1.7"/></svg>
<span class="t" style="left:93.75px;top:501.03px;font:normal 13px/1 'Liberation Sans', sans-serif;color:#15120f;transform:scaleX(0.9198);transform-origin:left top;-webkit-text-stroke:0.42px #15120f;">Downloaded Projects</span>
<div style="left:58.7px;top:536.7px;width:267.7px;height:1.3px;background:#b8c4d5;"></div>
<svg style="left:50.2px;top:521.8px" width="9" height="9" viewBox="0 0 9 9"><path d="M1.4 2.2L4.4 5.6L7.4 2.2" fill="none" stroke="#15120f" stroke-width="1.7"/></svg>
<span class="t" style="left:57.84px;top:521.03px;font:normal 13px/1 'Liberation Sans', sans-serif;color:#15120f;transform:scaleX(0.8953);transform-origin:left top;-webkit-text-stroke:0.42px #15120f;">RepliPAINT Projects</span>
<div style="left:75px;top:556.7px;width:251.4px;height:1.3px;background:#b8c4d5;"></div>
<svg style="left:74.9px;top:540.8px" width="16" height="13.2" viewBox="0 0 16 13.2"><rect x="0.9" y="0.9" width="13.6" height="11" fill="#fdf1ea" stroke="#0b0b0b" stroke-width="1.5"/><path d="M6.2 2.6h6v3.2l-1.6 1.8h-2.4l-1.2-1.6h-1.4z" fill="#0b0b0b"/><rect x="3.2" y="8.4" width="1.2" height="1.2" fill="#0b0b0b"/><path d="M4.6 8.2l2.4-2" stroke="#0b0b0b" stroke-width="1"/></svg>
<span class="t" style="left:93.75px;top:541.03px;font:normal 13px/1 'Liberation Sans', sans-serif;color:#15120f;transform:scaleX(0.9064);transform-origin:left top;-webkit-text-stroke:0.42px #15120f;">My Paint Files</span>
<div style="left:75px;top:576.7px;width:251.4px;height:1.3px;background:#b8c4d5;"></div>
<svg style="left:74.9px;top:560.8px" width="16" height="13.2" viewBox="0 0 16 13.2"><rect x="0.9" y="0.9" width="13.6" height="11" fill="#fdf1ea" stroke="#0b0b0b" stroke-width="1.5"/><path d="M11 3v5H5.2M7.4 5.6L4.8 8L7.4 10.4" fill="none" stroke="#0b0b0b" stroke-width="1.7"/></svg>
<span class="t" style="left:93.75px;top:561.03px;font:normal 13px/1 'Liberation Sans', sans-serif;color:#15120f;transform:scaleX(0.8859);transform-origin:left top;-webkit-text-stroke:0.42px #15120f;">Downloaded Paint Files</span>
<div style="left:33.33px;top:692px;width:6.67px;height:14.67px;background:#c0c1c7;"></div>
<div style="left:33.33px;top:700px;width:12.4px;height:6.67px;background:#c0c1c7;"></div>
<div style="left:33.33px;top:690.7px;width:6.67px;height:1.3px;background:#0b0b0b;"></div>
<div style="left:45.7px;top:700px;width:1.3px;height:6.67px;background:#0b0b0b;"></div>
<svg style="left:232.1px;top:66.6px" width="246.1" height="145.3" viewBox="232.1 66.6 246.1 145.3">
<defs><pattern id="sd" width="5.3333" height="5.3333" patternUnits="userSpaceOnUse"><rect x="1.6" y="0.5" width="1.4" height="1.4" fill="#f7962a"/><rect x="4.27" y="3.17" width="1.4" height="1.4" fill="#f7962a"/><rect x="-1.07" y="3.17" width="1.4" height="1.4" fill="#f7962a"/></pattern></defs>
<path d="M232.1 68.89999999999999H477.2V206.9L472.7 211.20000000000002H232.1Z" fill="#57514d"/>
<path d="M232.1 66.6H477.2V204.70000000000002L472.8 208.9H232.1Z" fill="#ffdc32"/>
<rect x="248" y="69.9" width="213.4" height="10.7" fill="url(#sd)"/>
<rect x="236.2" y="72" width="9.2" height="3.9" fill="#b5503a"/>
<path d="M465.6 69.9L473.4 77.9M473.4 69.9L465.6 77.9" stroke="#b24a3a" stroke-width="2.7"/>
</svg>
<span class="t" style="left:236.54px;top:87.33px;font:normal 13px/1 'Liberation Sans', sans-serif;color:#15120f;transform:scaleX(0.8916);transform-origin:left top;-webkit-text-stroke:0.42px #15120f;">TODO:</span>
<span class="t" style="left:236.54px;top:107.73px;font:normal 13px/1 'Liberation Sans', sans-serif;color:#15120f;transform:scaleX(0.9316);transform-origin:left top;-webkit-text-stroke:0.3px #15120f;">Make a new profile pic</span>
<div style="left:358.6px;top:106.6px;width:1.2px;height:14.6px;background:#15120f;"></div>
<div style="left:496px;top:33.3333px;width:784px;height:686.667px;background:#0b0b0b;"></div>
<svg style="left:497.33px;top:57.33px;" width="6.67" height="661.33" viewBox="2.667 1.333 6.67 661.33"><rect x="0" y="0" width="10.67" height="665.33" fill="url(#dp)"/></svg>
<svg style="left:1272.00px;top:57.33px;" width="6.67" height="661.33" viewBox="0.000 1.333 6.67 661.33"><rect x="0" y="0" width="10.67" height="665.33" fill="url(#dp)"/></svg>
<svg style="left:497.33px;top:712.00px;" width="781.33" height="6.67" viewBox="2.667 2.667 781.33 6.67"><rect x="0" y="0" width="785.33" height="10.67" fill="url(#dp)"/></svg>
<svg style="left:521.33px;top:34.67px;" width="757.33" height="21.33" viewBox="1.333 0.000 757.33 21.33"><rect x="0" y="0" width="761.33" height="25.33" fill="url(#dp)"/></svg>
<div style="left:497.333px;top:34.6667px;width:781.333px;height:0.9px;background:#f1e9e2;"></div>
<div style="left:497.333px;top:56px;width:781.333px;height:2.66667px;background:#0b0b0b;"></div>
<div style="left:504px;top:58.6667px;width:768px;height:653.333px;background:#0b0b0b;"></div>
<div style="left:505.333px;top:58.6667px;width:765.333px;height:652px;background:#fff0e6;"></div>
<div style="left:497.333px;top:34.6667px;width:22.6667px;height:21.3333px;background:#cacacf;"></div>
<div style="left:520px;top:34.6667px;width:1.33333px;height:21.3333px;background:#0b0b0b;"></div>
<div style="left:501.333px;top:38.6667px;width:14.6667px;height:13.3333px;background:#1d1b19;"></div>
<div style="left:502.667px;top:40px;width:12px;height:10.6667px;background:#867e75;"></div>
<div style="left:508px;top:41.3333px;width:1.33333px;height:1.06667px;background:#4a443f;"></div>
<div style="left:508px;top:44px;width:1.33333px;height:1.06667px;background:#3a3632;"></div>
<div style="left:508px;top:46.6667px;width:1.33333px;height:1.06667px;background:#2a2724;"></div>
<div style="left:505.333px;top:46.6667px;width:1.33333px;height:1.06667px;background:#1d1b19;"></div>
<div style="left:502.667px;top:46.6667px;width:1.33333px;height:1.06667px;background:#1d1b19;"></div>
<div style="left:1254.67px;top:34.6667px;width:1.33333px;height:21.3333px;background:#0b0b0b;"></div>
<div style="left:1256px;top:34.6667px;width:22.6667px;height:21.3333px;background:#cacacf;"></div>
<svg style="left:1258.5px;top:38.6333px" width="16" height="14" viewBox="0 0 16 14"><path d="M1.6 1 L14.4 13 M14.4 1 L1.6 13" stroke="#4f4a44" stroke-width="3.5" stroke-linecap="butt"/></svg>
<div style="left:855px;top:36px;width:65px;height:20px;background:#f4084f;"></div>
<span class="t" style="left:859.75px;top:39.87px;font:normal 13px/1 'Liberation Sans', sans-serif;color:#3d0a1c;transform:scaleX(0.7397);transform-origin:left top;-webkit-text-stroke:0.5px #3d0a1c;">REPLIPAINT</span>
<div style="left:505.333px;top:58.6667px;width:763.967px;height:20px;background:#395a8c;"></div>
<span class="t" style="left:510.28px;top:61.80px;font:normal 13px/1 'Liberation Sans', sans-serif;color:#e9eef6;transform:scaleX(0.8732);transform-origin:left top;-webkit-text-stroke:0.3px #e9eef6;">RepliPAINT Actions</span>
<div style="left:505.2px;top:78.3px;width:425.2px;height:573.7px;background:#fff0e6;"></div>
<div style="left:505.2px;top:80.7px;width:423.8px;height:28.1px;background:#efe3da;"></div>
<div class="cd" style="left:505.2px;top:78.3px;width:424.2px;height:573.7px;overflow:hidden;font:17.6px/28px 'Liberation Mono', monospace;-webkit-text-stroke-width:0.3px;"><div style="left:30.40px;top:3.43px;height:28px;white-space:pre;transform:scaleX(0.8786);transform-origin:left top"><span style="color:#1c1a18">rx </span><span style="color:#3da56b">= ((</span><span style="color:#f5862e">x</span><span style="color:#3da56b">-</span><span style="color:#3a5c8e">8</span><span style="color:#3da56b">)+(</span><span style="color:#f5862e">y</span><span style="color:#3da56b">/</span><span style="color:#3a5c8e">2</span><span style="color:#3da56b">))</span></div><div style="right:405.10px;top:3.43px;height:28px;white-space:pre;color:#8f8881;transform:scaleX(0.8786);transform-origin:right top">1</div><div style="left:30.40px;top:31.40px;height:28px;white-space:pre;transform:scaleX(0.8786);transform-origin:left top"><span style="color:#1c1a18">ry </span><span style="color:#3da56b">= ((</span><span style="color:#f5862e">y</span><span style="color:#3da56b">-</span><span style="color:#3a5c8e">4</span><span style="color:#3da56b">)-(</span><span style="color:#f5862e">x</span><span style="color:#3da56b">/</span><span style="color:#3a5c8e">2</span><span style="color:#3da56b">))</span></div><div style="right:405.10px;top:31.40px;height:28px;white-space:pre;color:#8f8881;transform:scaleX(0.8786);transform-origin:right top">2</div><div style="left:30.40px;top:59.36px;height:28px;white-space:pre;transform:scaleX(0.8786);transform-origin:left top"></div><div style="right:405.10px;top:59.36px;height:28px;white-space:pre;color:#8f8881;transform:scaleX(0.8786);transform-origin:right top">3</div><div style="left:30.40px;top:87.33px;height:28px;white-space:pre;transform:scaleX(0.8786);transform-origin:left top"><span style="color:#1c1a18">tx </span><span style="color:#3da56b">= </span><span style="color:#1c1a18">rx </span><span style="color:#3da56b">% </span><span style="color:#3a5c8e">16</span></div><div style="right:405.10px;top:87.33px;height:28px;white-space:pre;color:#8f8881;transform:scaleX(0.8786);transform-origin:right top">4</div><div style="left:30.40px;top:115.29px;height:28px;white-space:pre;transform:scaleX(0.8786);transform-origin:left top"><span style="color:#1c1a18">ty </span><span style="color:#3da56b">= </span><span style="color:#1c1a18">ry </span><span style="color:#3da56b">% </span><span style="color:#3a5c8e">16</span></div><div style="right:405.10px;top:115.29px;height:28px;white-space:pre;color:#8f8881;transform:scaleX(0.8786);transform-origin:right top">5</div><div style="left:30.40px;top:143.26px;height:28px;white-space:pre;transform:scaleX(0.8786);transform-origin:left top"></div><div style="right:405.10px;top:143.26px;height:28px;white-space:pre;color:#8f8881;transform:scaleX(0.8786);transform-origin:right top">6</div><div style="left:30.40px;top:171.22px;height:28px;white-space:pre;transform:scaleX(0.8786);transform-origin:left top"><span style="color:#1c1a18">cx </span><span style="color:#3da56b">= </span><span style="color:#1c1a18">tx </span><span style="color:#3da56b">- </span><span style="color:#3a5c8e">7</span></div><div style="right:405.10px;top:171.22px;height:28px;white-space:pre;color:#8f8881;transform:scaleX(0.8786);transform-origin:right top">7</div><div style="left:30.40px;top:199.19px;height:28px;white-space:pre;transform:scaleX(0.8786);transform-origin:left top"><span style="color:#1c1a18">cy </span><span style="color:#3da56b">= </span><span style="color:#1c1a18">ty </span><span style="color:#3da56b">- </span><span style="color:#3a5c8e">7</span></div><div style="right:405.10px;top:199.19px;height:28px;white-space:pre;color:#8f8881;transform:scaleX(0.8786);transform-origin:right top">8</div><div style="left:30.40px;top:227.15px;height:28px;white-space:pre;transform:scaleX(0.8786);transform-origin:left top"></div><div style="right:405.10px;top:227.15px;height:28px;white-space:pre;color:#8f8881;transform:scaleX(0.8786);transform-origin:right top">9</div><div style="left:30.40px;top:255.12px;height:28px;white-space:pre;transform:scaleX(0.8786);transform-origin:left top"><span style="color:#1c1a18">m </span><span style="color:#3da56b">= max(abs(</span><span style="color:#1c1a18">cx</span><span style="color:#3da56b">), abs(</span><span style="color:#1c1a18">cy</span><span style="color:#3da56b">))</span></div><div style="right:405.10px;top:255.12px;height:28px;white-space:pre;color:#8f8881;transform:scaleX(0.8786);transform-origin:right top">10</div><div style="left:30.40px;top:283.08px;height:28px;white-space:pre;transform:scaleX(0.8786);transform-origin:left top"></div><div style="right:405.10px;top:283.08px;height:28px;white-space:pre;color:#8f8881;transform:scaleX(0.8786);transform-origin:right top">11</div><div style="left:30.40px;top:311.05px;height:28px;white-space:pre;transform:scaleX(0.8786);transform-origin:left top"><span style="color:#1c1a18">tile_x </span><span style="color:#3da56b">= floor(</span><span style="color:#1c1a18">rx</span><span style="color:#3da56b">/</span><span style="color:#3a5c8e">16</span><span style="color:#3da56b">)</span></div><div style="right:405.10px;top:311.05px;height:28px;white-space:pre;color:#8f8881;transform:scaleX(0.8786);transform-origin:right top">12</div><div style="left:30.40px;top:339.01px;height:28px;white-space:pre;transform:scaleX(0.8786);transform-origin:left top"><span style="color:#1c1a18">tile_y </span><span style="color:#3da56b">= floor(</span><span style="color:#1c1a18">ry</span><span style="color:#3da56b">/</span><span style="color:#3a5c8e">16</span><span style="color:#3da56b">)</span></div><div style="right:405.10px;top:339.01px;height:28px;white-space:pre;color:#8f8881;transform:scaleX(0.8786);transform-origin:right top">13</div><div style="left:30.40px;top:366.98px;height:28px;white-space:pre;transform:scaleX(0.8786);transform-origin:left top"><span style="color:#1c1a18">t_c </span><span style="color:#3da56b">= (((</span><span style="color:#1c1a18">tile_x </span><span style="color:#3da56b">* </span><span style="color:#3a5c8e">3 </span><span style="color:#3da56b">+ </span><span style="color:#1c1a18">tile_y </span><span style="color:#3da56b">* </span><span style="color:#3a5c8e">2</span><span style="color:#3da56b">)) % </span><span style="color:#3a5c8e">4</span><span style="color:#3da56b">)</span></div><div style="right:405.10px;top:366.98px;height:28px;white-space:pre;color:#8f8881;transform:scaleX(0.8786);transform-origin:right top">14</div><div style="left:30.40px;top:394.94px;height:28px;white-space:pre;transform:scaleX(0.8786);transform-origin:left top"><span style="color:#1c1a18">p </span><span style="color:#3da56b">= { </span><span style="color:#3a5c8e">12</span><span style="color:#3da56b">, </span><span style="color:#3a5c8e">6</span><span style="color:#3da56b">, </span><span style="color:#3a5c8e">13</span><span style="color:#3da56b">, </span><span style="color:#3a5c8e">7 </span><span style="color:#3da56b">}</span></div><div style="right:405.10px;top:394.94px;height:28px;white-space:pre;color:#8f8881;transform:scaleX(0.8786);transform-origin:right top">15</div><div style="left:30.40px;top:422.91px;height:28px;white-space:pre;transform:scaleX(0.8786);transform-origin:left top"><span style="color:#1c1a18">c </span><span style="color:#3da56b">= </span><span style="color:#1c1a18">p</span><span style="color:#3da56b">[</span><span style="color:#1c1a18">t_c</span><span style="color:#3da56b">+</span><span style="color:#3a5c8e">1</span><span style="color:#3da56b">]</span></div><div style="right:405.10px;top:422.91px;height:28px;white-space:pre;color:#8f8881;transform:scaleX(0.8786);transform-origin:right top">16</div><div style="left:30.40px;top:450.87px;height:28px;white-space:pre;transform:scaleX(0.8786);transform-origin:left top"></div><div style="right:405.10px;top:450.87px;height:28px;white-space:pre;color:#8f8881;transform:scaleX(0.8786);transform-origin:right top">17</div><div style="left:30.40px;top:478.84px;height:28px;white-space:pre;transform:scaleX(0.8786);transform-origin:left top"></div><div style="right:405.10px;top:478.84px;height:28px;white-space:pre;color:#8f8881;transform:scaleX(0.8786);transform-origin:right top">18</div><div style="left:30.40px;top:506.80px;height:28px;white-space:pre;transform:scaleX(0.8786);transform-origin:left top"><span style="color:#1b4bea">if </span><span style="color:#3da56b">(</span><span style="color:#f5862e">x </span><span style="color:#3da56b">+ </span><span style="color:#f5862e">y</span><span style="color:#3da56b">) % </span><span style="color:#3a5c8e">4 </span><span style="color:#3da56b">== </span><span style="color:#3a5c8e">1 </span><span style="color:#1b4bea">and </span><span style="color:#f5862e">y </span><span style="color:#3da56b">% </span><span style="color:#3a5c8e">2 </span><span style="color:#3da56b">== </span><span style="color:#3a5c8e">0 </span><span style="color:#1b4bea">then</span></div><div style="right:405.10px;top:506.80px;height:28px;white-space:pre;color:#8f8881;transform:scaleX(0.8786);transform-origin:right top">19</div><div style="left:30.40px;top:534.77px;height:28px;white-space:pre;transform:scaleX(0.8786);transform-origin:left top"><span style="color:#1b4bea">  if </span><span style="color:#1c1a18">c </span><span style="color:#3da56b">~= </span><span style="color:#3a5c8e">12 </span><span style="color:#1b4bea">then </span><span style="color:#1c1a18">c </span><span style="color:#3da56b">= </span><span style="color:#3a5c8e">12 </span><span style="color:#1b4bea">else </span><span style="color:#1c1a18">c </span><span style="color:#3da56b">= </span><span style="color:#3a5c8e">13 </span><span style="color:#1b4bea">end</span></div><div style="right:405.10px;top:534.77px;height:28px;white-space:pre;color:#8f8881;transform:scaleX(0.8786);transform-origin:right top">20</div><div style="left:30.40px;top:564.13px;height:28px;white-space:pre;transform:scaleX(0.8786);transform-origin:left top"><span style="color:#1b4bea">end</span></div><div style="right:405.10px;top:564.13px;height:28px;white-space:pre;color:#8f8881;transform:scaleX(0.8786);transform-origin:right top">21</div></div>
<div style="left:929.3px;top:78.3px;width:20px;height:633px;background:#0b0b0b;"></div>
<div style="left:930.6px;top:78.3px;width:8.2px;height:573.7px;background:#c0c1c7;"></div>
<div style="left:930.6px;top:79.6px;width:8.2px;height:1.2px;background:#0b0b0b;"></div>
<div style="left:930.6px;top:80.8px;width:8.2px;height:2.2px;background:#e8e8ec;"></div>
<div style="left:930.6px;top:83px;width:8.2px;height:1px;background:#9a9aa0;"></div>
<div style="left:930.6px;top:537.4px;width:8.2px;height:1.4px;background:#0b0b0b;"></div>
<div style="left:941.2px;top:78.3px;width:6.7px;height:633px;background:#c0c1c7;"></div>
<svg style="left:941.20px;top:381.33px;" width="6.70" height="26.67" viewBox="2.667 0.000 6.70 26.67"><rect x="0" y="0" width="10.70" height="30.67" fill="url(#dp)"/></svg>
<div style="left:941.2px;top:380px;width:6.7px;height:1.33px;background:#0b0b0b;"></div>
<div style="left:941.2px;top:408px;width:6.7px;height:1.33px;background:#0b0b0b;"></div>
<div style="left:505.2px;top:652px;width:435px;height:27px;background:#c0c1c7;"></div>
<svg style="left:507px;top:654.4px" width="260.8" height="22.4" viewBox="507 654.4 260.8 22.4"><rect x="508.65" y="656.05" width="257.5" height="19.1" fill="#ffdc32" stroke="#0b0b0b" stroke-width="1.3" stroke-dasharray="1.333 1.333"/></svg>
<span class="t" style="left:579.54px;top:659.43px;font:normal 13px/1 'Liberation Sans', sans-serif;color:#15120f;transform:scaleX(0.8374);transform-origin:left top;-webkit-text-stroke:0.42px #15120f;">RUN CODE (CTRL+R)</span>
<svg style="left:770.8px;top:654.2px" width="167" height="22.6" viewBox="770.8 654.2 167 22.6"><rect x="772.45" y="655.85" width="163.7" height="19.3" fill="#c0c1c7" stroke="#0b0b0b" stroke-width="1.3" stroke-dasharray="1.333 1.333"/></svg>
<span class="t" style="left:775.04px;top:659.43px;font:normal 13px/1 'Liberation Sans', sans-serif;color:#15120f;transform:scaleX(0.9162);transform-origin:left top;-webkit-text-stroke:0.42px #15120f;">Auto run code as I type</span>
<svg style="left:903px;top:657px" width="33" height="16.8" viewBox="903 657 33 16.8"><rect x="904.7" y="658.7" width="29.6" height="13.4" rx="3" fill="#3da56b" stroke="#15120f" stroke-width="1.5"/><rect x="920.12" y="658.7" width="14.18" height="13.4" rx="2.6" fill="#c9cacf" stroke="#15120f" stroke-width="1.5"/><path d="M922.12 660.4H931.8" stroke="#efeff2" stroke-width="1.4"/></svg>
<div style="left:505.2px;top:678.8px;width:27.5px;height:32px;background:#dde8f6;"></div>
<span class="t" style="left:515.26px;top:688.72px;font:normal 12px/1 'Liberation Sans', sans-serif;color:#17110f;transform:scaleX(0.8600);transform-origin:center top;-webkit-text-stroke:0.55px #17110f;">1</span>
<div style="left:532.39px;top:678.8px;width:27.5px;height:32px;background:#6b7a9c;"></div>
<span class="t" style="left:542.45px;top:688.72px;font:normal 12px/1 'Liberation Sans', sans-serif;color:#17110f;transform:scaleX(0.8600);transform-origin:center top;-webkit-text-stroke:0.55px #17110f;">2</span>
<div style="left:559.58px;top:678.8px;width:27.5px;height:32px;background:#14181c;"></div>
<span class="t" style="left:569.64px;top:688.72px;font:normal 12px/1 'Liberation Sans', sans-serif;color:#17110f;transform:scaleX(0.8600);transform-origin:center top;-webkit-text-stroke:0.55px #17110f;">3</span>
<div style="left:586.77px;top:678.8px;width:27.5px;height:32px;background:#f6a6a6;"></div>
<span class="t" style="left:596.83px;top:688.72px;font:normal 12px/1 'Liberation Sans', sans-serif;color:#17110f;transform:scaleX(0.8600);transform-origin:center top;-webkit-text-stroke:0.55px #17110f;">4</span>
<div style="left:613.96px;top:678.8px;width:27.5px;height:32px;background:#d9639b;"></div>
<span class="t" style="left:624.02px;top:688.72px;font:normal 12px/1 'Liberation Sans', sans-serif;color:#17110f;transform:scaleX(0.8600);transform-origin:center top;-webkit-text-stroke:0.55px #17110f;">5</span>
<div style="left:641.15px;top:678.8px;width:27.5px;height:32px;background:#7b2d9f;"></div>
<span class="t" style="left:651.21px;top:688.72px;font:normal 12px/1 'Liberation Sans', sans-serif;color:#17110f;transform:scaleX(0.8600);transform-origin:center top;-webkit-text-stroke:0.55px #17110f;">6</span>
<div style="left:668.34px;top:678.8px;width:27.5px;height:32px;background:#ee3358;"></div>
<span class="t" style="left:678.40px;top:688.72px;font:normal 12px/1 'Liberation Sans', sans-serif;color:#17110f;transform:scaleX(0.8600);transform-origin:center top;-webkit-text-stroke:0.55px #17110f;">7</span>
<div style="left:695.53px;top:678.8px;width:27.5px;height:32px;background:#f4835a;"></div>
<span class="t" style="left:705.59px;top:688.72px;font:normal 12px/1 'Liberation Sans', sans-serif;color:#17110f;transform:scaleX(0.8600);transform-origin:center top;-webkit-text-stroke:0.55px #17110f;">8</span>
<div style="left:722.72px;top:678.8px;width:27.5px;height:32px;background:#fcc265;"></div>
<span class="t" style="left:732.78px;top:688.72px;font:normal 12px/1 'Liberation Sans', sans-serif;color:#17110f;transform:scaleX(0.8600);transform-origin:center top;-webkit-text-stroke:0.55px #17110f;">9</span>
<div style="left:749.91px;top:678.8px;width:27.5px;height:32px;background:#82c34d;"></div>
<span class="t" style="left:756.63px;top:688.72px;font:normal 12px/1 'Liberation Sans', sans-serif;color:#17110f;transform:scaleX(0.8600);transform-origin:center top;-webkit-text-stroke:0.55px #17110f;">10</span>
<div style="left:777.1px;top:678.8px;width:27.5px;height:32px;background:#3a9a58;"></div>
<span class="t" style="left:784.27px;top:688.72px;font:normal 12px/1 'Liberation Sans', sans-serif;color:#17110f;transform:scaleX(0.8600);transform-origin:center top;-webkit-text-stroke:0.55px #17110f;">11</span>
<div style="left:804.29px;top:678.8px;width:27.5px;height:32px;background:#3b346e;"></div>
<span class="t" style="left:811.01px;top:688.72px;font:normal 12px/1 'Liberation Sans', sans-serif;color:#17110f;transform:scaleX(0.8600);transform-origin:center top;-webkit-text-stroke:0.55px #17110f;">12</span>
<div style="left:831.48px;top:678.8px;width:27.5px;height:32px;background:#4a58b4;"></div>
<span class="t" style="left:838.20px;top:688.72px;font:normal 12px/1 'Liberation Sans', sans-serif;color:#17110f;transform:scaleX(0.8600);transform-origin:center top;-webkit-text-stroke:0.55px #17110f;">13</span>
<div style="left:858.67px;top:678.8px;width:27.5px;height:32px;background:#6f9be0;"></div>
<span class="t" style="left:865.39px;top:688.72px;font:normal 12px/1 'Liberation Sans', sans-serif;color:#17110f;transform:scaleX(0.8600);transform-origin:center top;-webkit-text-stroke:0.55px #17110f;">14</span>
<div style="left:885.86px;top:678.8px;width:27.5px;height:32px;background:#a3504f;"></div>
<span class="t" style="left:892.58px;top:688.72px;font:normal 12px/1 'Liberation Sans', sans-serif;color:#17110f;transform:scaleX(0.8600);transform-origin:center top;-webkit-text-stroke:0.55px #17110f;">15</span>
<div style="left:913.05px;top:678.8px;width:27.19px;height:32px;background:#5a2238;"></div>
<span class="t" style="left:919.77px;top:688.72px;font:normal 12px/1 'Liberation Sans', sans-serif;color:#17110f;transform:scaleX(0.8600);transform-origin:center top;-webkit-text-stroke:0.55px #17110f;">16</span>
<div style="left:949.3px;top:78.3px;width:321.9px;height:633px;background:#fff0e6;"></div>
<span class="t" style="left:951.54px;top:82.43px;font:normal 13px/1 'Liberation Sans', sans-serif;color:#15120f;transform:scaleX(0.8408);transform-origin:left top;-webkit-text-stroke:0.42px #15120f;">OUTPUT IMAGE</span>
<svg style="left:952px;top:101.3px" width="294.6" height="525" viewBox="0 0 90 160" preserveAspectRatio="none" shape-rendering="crispEdges"><rect width="90" height="160" fill="#3b346e"/><path fill="#4a58b4" d="M8 0h1v1h-1zM10 0h3v1h-3zM14 0h3v1h-3zM18 0h3v1h-3zM22 0h1v1h-1zM40 0h1v1h-1zM42 0h3v1h-3zM46 0h3v1h-3zM50 0h3v1h-3zM54 0h1v1h-1zM72 0h1v1h-1zM74 0h3v1h-3zM78 0h3v1h-3zM82 0h3v1h-3zM86 0h1v1h-1zM8 1h14v1h-14zM40 1h14v1h-14zM72 1h14v1h-14zM8 2h3v1h-3zM12 2h3v1h-3zM16 2h3v1h-3zM20 2h2v1h-2zM40 2h3v1h-3zM44 2h3v1h-3zM48 2h3v1h-3zM52 2h2v1h-2zM72 2h3v1h-3zM76 2h3v1h-3zM80 2h3v1h-3zM84 2h2v1h-2zM7 3h14v1h-14zM39 3h14v1h-14zM71 3h14v1h-14zM6 4h3v1h-3zM10 4h3v1h-3zM14 4h3v1h-3zM18 4h3v1h-3zM38 4h3v1h-3zM42 4h3v1h-3zM46 4h3v1h-3zM50 4h3v1h-3zM70 4h3v1h-3zM74 4h3v1h-3zM78 4h3v1h-3zM82 4h3v1h-3zM6 5h14v1h-14zM38 5h14v1h-14zM70 5h14v1h-14zM8 6h3v1h-3zM12 6h3v1h-3zM16 6h3v1h-3zM40 6h3v1h-3zM44 6h3v1h-3zM48 6h3v1h-3zM72 6h3v1h-3zM76 6h3v1h-3zM80 6h3v1h-3zM10 7h9v1h-9zM42 7h9v1h-9zM74 7h9v1h-9zM5 8h1v1h-1zM12 8h1v1h-1zM14 8h3v1h-3zM18 8h1v1h-1zM37 8h1v1h-1zM44 8h1v1h-1zM46 8h3v1h-3zM50 8h1v1h-1zM69 8h1v1h-1zM76 8h1v1h-1zM78 8h3v1h-3zM82 8h1v1h-1zM14 9h4v1h-4zM46 9h4v1h-4zM78 9h4v1h-4zM3 10h1v1h-1zM7 10h1v1h-1zM11 10h1v1h-1zM16 10h2v1h-2zM35 10h1v1h-1zM39 10h1v1h-1zM43 10h1v1h-1zM48 10h2v1h-2zM67 10h1v1h-1zM71 10h1v1h-1zM75 10h1v1h-1zM80 10h2v1h-2zM5 12h1v1h-1zM9 12h1v1h-1zM13 12h1v1h-1zM37 12h1v1h-1zM41 12h1v1h-1zM45 12h1v1h-1zM69 12h1v1h-1zM73 12h1v1h-1zM77 12h1v1h-1zM3 14h1v1h-1zM7 14h1v1h-1zM11 14h1v1h-1zM15 14h1v1h-1zM35 14h1v1h-1zM39 14h1v1h-1zM43 14h1v1h-1zM47 14h1v1h-1zM67 14h1v1h-1zM71 14h1v1h-1zM75 14h1v1h-1zM79 14h1v1h-1zM1 16h1v1h-1zM5 16h1v1h-1zM9 16h1v1h-1zM13 16h1v1h-1zM33 16h1v1h-1zM37 16h1v1h-1zM41 16h1v1h-1zM45 16h1v1h-1zM65 16h1v1h-1zM69 16h1v1h-1zM73 16h1v1h-1zM77 16h1v1h-1zM3 18h1v1h-1zM7 18h1v1h-1zM11 18h1v1h-1zM35 18h1v1h-1zM39 18h1v1h-1zM43 18h1v1h-1zM67 18h1v1h-1zM71 18h1v1h-1zM75 18h1v1h-1zM0 20h1v1h-1zM5 20h1v1h-1zM9 20h1v1h-1zM30 20h3v1h-3zM37 20h1v1h-1zM41 20h1v1h-1zM62 20h3v1h-3zM69 20h1v1h-1zM73 20h1v1h-1zM0 21h3v1h-3zM30 21h5v1h-5zM62 21h5v1h-5zM0 22h3v1h-3zM4 22h1v1h-1zM11 22h1v1h-1zM29 22h2v1h-2zM32 22h3v1h-3zM36 22h1v1h-1zM43 22h1v1h-1zM61 22h2v1h-2zM64 22h3v1h-3zM68 22h1v1h-1zM75 22h1v1h-1zM0 23h7v1h-7zM29 23h10v1h-10zM61 23h10v1h-10zM0 24h1v1h-1zM2 24h3v1h-3zM6 24h3v1h-3zM28 24h1v1h-1zM30 24h3v1h-3zM34 24h3v1h-3zM38 24h3v1h-3zM60 24h1v1h-1zM62 24h3v1h-3zM66 24h3v1h-3zM70 24h3v1h-3zM0 25h10v1h-10zM28 25h14v1h-14zM60 25h14v1h-14zM0 26h3v1h-3zM4 26h3v1h-3zM8 26h2v1h-2zM28 26h3v1h-3zM32 26h3v1h-3zM36 26h3v1h-3zM40 26h2v1h-2zM60 26h3v1h-3zM64 26h3v1h-3zM68 26h3v1h-3zM72 26h2v1h-2zM0 27h9v1h-9zM27 27h14v1h-14zM59 27h14v1h-14zM0 28h1v1h-1zM2 28h3v1h-3zM6 28h3v1h-3zM26 28h3v1h-3zM30 28h3v1h-3zM34 28h3v1h-3zM38 28h3v1h-3zM58 28h3v1h-3zM62 28h3v1h-3zM66 28h3v1h-3zM70 28h3v1h-3zM0 29h8v1h-8zM26 29h14v1h-14zM58 29h14v1h-14zM0 30h3v1h-3zM4 30h3v1h-3zM25 30h2v1h-2zM28 30h3v1h-3zM32 30h3v1h-3zM36 30h3v1h-3zM57 30h2v1h-2zM60 30h3v1h-3zM64 30h3v1h-3zM68 30h3v1h-3zM89 30h1v1h-1zM0 31h7v1h-7zM26 31h13v1h-13zM58 31h13v1h-13zM0 32h1v1h-1zM2 32h3v1h-3zM6 32h1v1h-1zM28 32h1v1h-1zM30 32h3v1h-3zM34 32h3v1h-3zM38 32h1v1h-1zM60 32h1v1h-1zM62 32h3v1h-3zM66 32h3v1h-3zM70 32h1v1h-1zM0 33h6v1h-6zM30 33h8v1h-8zM62 33h8v1h-8zM0 34h3v1h-3zM4 34h2v1h-2zM23 34h1v1h-1zM27 34h1v1h-1zM32 34h3v1h-3zM36 34h2v1h-2zM55 34h1v1h-1zM59 34h1v1h-1zM64 34h3v1h-3zM68 34h2v1h-2zM87 34h1v1h-1zM2 35h3v1h-3zM34 35h3v1h-3zM66 35h3v1h-3zM4 36h1v1h-1zM25 36h1v1h-1zM29 36h1v1h-1zM36 36h1v1h-1zM57 36h1v1h-1zM61 36h1v1h-1zM68 36h1v1h-1zM89 36h1v1h-1zM3 38h1v1h-1zM23 38h1v1h-1zM27 38h1v1h-1zM31 38h1v1h-1zM35 38h1v1h-1zM55 38h1v1h-1zM59 38h1v1h-1zM63 38h1v1h-1zM67 38h1v1h-1zM87 38h1v1h-1zM1 40h1v1h-1zM21 40h1v1h-1zM25 40h1v1h-1zM29 40h1v1h-1zM33 40h1v1h-1zM53 40h1v1h-1zM57 40h1v1h-1zM61 40h1v1h-1zM65 40h1v1h-1zM85 40h1v1h-1zM89 40h1v1h-1zM19 42h1v1h-1zM23 42h1v1h-1zM27 42h1v1h-1zM31 42h1v1h-1zM51 42h1v1h-1zM55 42h1v1h-1zM59 42h1v1h-1zM63 42h1v1h-1zM83 42h1v1h-1zM87 42h1v1h-1zM21 44h1v1h-1zM25 44h1v1h-1zM29 44h1v1h-1zM53 44h1v1h-1zM57 44h1v1h-1zM61 44h1v1h-1zM85 44h1v1h-1zM89 44h1v1h-1zM18 45h1v1h-1zM50 45h1v1h-1zM82 45h1v1h-1zM17 46h2v1h-2zM20 46h1v1h-1zM27 46h1v1h-1zM31 46h1v1h-1zM49 46h2v1h-2zM52 46h1v1h-1zM59 46h1v1h-1zM63 46h1v1h-1zM81 46h2v1h-2zM84 46h1v1h-1zM17 47h6v1h-6zM49 47h6v1h-6zM81 47h6v1h-6zM16 48h1v1h-1zM18 48h3v1h-3zM22 48h3v1h-3zM29 48h1v1h-1zM48 48h1v1h-1zM50 48h3v1h-3zM54 48h3v1h-3zM61 48h1v1h-1zM80 48h1v1h-1zM82 48h3v1h-3zM86 48h3v1h-3zM16 49h11v1h-11zM48 49h11v1h-11zM80 49h10v1h-10zM16 50h3v1h-3zM20 50h3v1h-3zM24 50h3v1h-3zM28 50h1v1h-1zM48 50h3v1h-3zM52 50h3v1h-3zM56 50h3v1h-3zM60 50h1v1h-1zM80 50h3v1h-3zM84 50h3v1h-3zM88 50h2v1h-2zM15 51h14v1h-14zM47 51h14v1h-14zM79 51h11v1h-11zM14 52h3v1h-3zM18 52h3v1h-3zM22 52h3v1h-3zM26 52h3v1h-3zM46 52h3v1h-3zM50 52h3v1h-3zM54 52h3v1h-3zM58 52h3v1h-3zM78 52h3v1h-3zM82 52h3v1h-3zM86 52h3v1h-3zM14 53h14v1h-14zM46 53h14v1h-14zM78 53h12v1h-12zM13 54h2v1h-2zM16 54h3v1h-3zM20 54h3v1h-3zM24 54h3v1h-3zM45 54h2v1h-2zM48 54h3v1h-3zM52 54h3v1h-3zM56 54h3v1h-3zM77 54h2v1h-2zM80 54h3v1h-3zM84 54h3v1h-3zM88 54h2v1h-2zM13 55h14v1h-14zM45 55h14v1h-14zM77 55h13v1h-13zM12 56h1v1h-1zM14 56h3v1h-3zM18 56h3v1h-3zM22 56h3v1h-3zM26 56h1v1h-1zM44 56h1v1h-1zM46 56h3v1h-3zM50 56h3v1h-3zM54 56h3v1h-3zM58 56h1v1h-1zM76 56h1v1h-1zM78 56h3v1h-3zM82 56h3v1h-3zM86 56h3v1h-3zM14 57h12v1h-12zM46 57h12v1h-12zM78 57h12v1h-12zM11 58h1v1h-1zM16 58h3v1h-3zM20 58h3v1h-3zM24 58h2v1h-2zM43 58h1v1h-1zM48 58h3v1h-3zM52 58h3v1h-3zM56 58h2v1h-2zM75 58h1v1h-1zM80 58h3v1h-3zM84 58h3v1h-3zM88 58h2v1h-2zM18 59h7v1h-7zM50 59h7v1h-7zM82 59h7v1h-7zM13 60h1v1h-1zM20 60h1v1h-1zM22 60h3v1h-3zM45 60h1v1h-1zM52 60h1v1h-1zM54 60h3v1h-3zM77 60h1v1h-1zM84 60h1v1h-1zM86 60h3v1h-3zM22 61h2v1h-2zM54 61h2v1h-2zM86 61h2v1h-2zM11 62h1v1h-1zM15 62h1v1h-1zM19 62h1v1h-1zM43 62h1v1h-1zM47 62h1v1h-1zM51 62h1v1h-1zM75 62h1v1h-1zM79 62h1v1h-1zM83 62h1v1h-1zM9 64h1v1h-1zM13 64h1v1h-1zM17 64h1v1h-1zM21 64h1v1h-1zM41 64h1v1h-1zM45 64h1v1h-1zM49 64h1v1h-1zM53 64h1v1h-1zM73 64h1v1h-1zM77 64h1v1h-1zM81 64h1v1h-1zM85 64h1v1h-1zM7 66h1v1h-1zM11 66h1v1h-1zM15 66h1v1h-1zM19 66h1v1h-1zM39 66h1v1h-1zM43 66h1v1h-1zM47 66h1v1h-1zM51 66h1v1h-1zM71 66h1v1h-1zM75 66h1v1h-1zM79 66h1v1h-1zM83 66h1v1h-1zM9 68h1v1h-1zM13 68h1v1h-1zM17 68h1v1h-1zM41 68h1v1h-1zM45 68h1v1h-1zM49 68h1v1h-1zM73 68h1v1h-1zM77 68h1v1h-1zM81 68h1v1h-1zM11 70h1v1h-1zM15 70h1v1h-1zM19 70h1v1h-1zM43 70h1v1h-1zM47 70h1v1h-1zM51 70h1v1h-1zM75 70h1v1h-1zM79 70h1v1h-1zM83 70h1v1h-1zM5 71h2v1h-2zM37 71h2v1h-2zM69 71h2v1h-2zM4 72h1v1h-1zM6 72h3v1h-3zM13 72h1v1h-1zM17 72h1v1h-1zM36 72h1v1h-1zM38 72h3v1h-3zM45 72h1v1h-1zM49 72h1v1h-1zM68 72h1v1h-1zM70 72h3v1h-3zM77 72h1v1h-1zM81 72h1v1h-1zM4 73h7v1h-7zM36 73h7v1h-7zM68 73h7v1h-7zM4 74h3v1h-3zM8 74h3v1h-3zM12 74h1v1h-1zM36 74h3v1h-3zM40 74h3v1h-3zM44 74h1v1h-1zM68 74h3v1h-3zM72 74h3v1h-3zM76 74h1v1h-1zM3 75h12v1h-12zM35 75h12v1h-12zM67 75h12v1h-12zM2 76h3v1h-3zM6 76h3v1h-3zM10 76h3v1h-3zM14 76h3v1h-3zM34 76h3v1h-3zM38 76h3v1h-3zM42 76h3v1h-3zM46 76h3v1h-3zM66 76h3v1h-3zM70 76h3v1h-3zM74 76h3v1h-3zM78 76h3v1h-3zM2 77h14v1h-14zM34 77h14v1h-14zM66 77h14v1h-14zM1 78h2v1h-2zM4 78h3v1h-3zM8 78h3v1h-3zM12 78h3v1h-3zM33 78h2v1h-2zM36 78h3v1h-3zM40 78h3v1h-3zM44 78h3v1h-3zM65 78h2v1h-2zM68 78h3v1h-3zM72 78h3v1h-3zM76 78h3v1h-3zM1 79h14v1h-14zM33 79h14v1h-14zM65 79h14v1h-14zM0 80h1v1h-1zM2 80h3v1h-3zM6 80h3v1h-3zM10 80h3v1h-3zM14 80h1v1h-1zM32 80h1v1h-1zM34 80h3v1h-3zM38 80h3v1h-3zM42 80h3v1h-3zM46 80h1v1h-1zM64 80h1v1h-1zM66 80h3v1h-3zM70 80h3v1h-3zM74 80h3v1h-3zM78 80h1v1h-1zM0 81h14v1h-14zM32 81h14v1h-14zM64 81h14v1h-14zM0 82h3v1h-3zM4 82h3v1h-3zM8 82h3v1h-3zM12 82h2v1h-2zM32 82h3v1h-3zM36 82h3v1h-3zM40 82h3v1h-3zM44 82h2v1h-2zM64 82h3v1h-3zM68 82h3v1h-3zM72 82h3v1h-3zM76 82h2v1h-2zM2 83h11v1h-11zM34 83h11v1h-11zM66 83h11v1h-11zM4 84h1v1h-1zM6 84h3v1h-3zM10 84h3v1h-3zM36 84h1v1h-1zM38 84h3v1h-3zM42 84h3v1h-3zM68 84h1v1h-1zM70 84h3v1h-3zM74 84h3v1h-3zM6 85h6v1h-6zM38 85h6v1h-6zM70 85h6v1h-6zM3 86h1v1h-1zM8 86h3v1h-3zM31 86h1v1h-1zM35 86h1v1h-1zM40 86h3v1h-3zM63 86h1v1h-1zM67 86h1v1h-1zM72 86h3v1h-3zM10 87h1v1h-1zM42 87h1v1h-1zM74 87h1v1h-1zM1 88h1v1h-1zM5 88h1v1h-1zM29 88h1v1h-1zM33 88h1v1h-1zM37 88h1v1h-1zM61 88h1v1h-1zM65 88h1v1h-1zM69 88h1v1h-1zM3 90h1v1h-1zM7 90h1v1h-1zM27 90h1v1h-1zM31 90h1v1h-1zM35 90h1v1h-1zM39 90h1v1h-1zM59 90h1v1h-1zM63 90h1v1h-1zM67 90h1v1h-1zM71 90h1v1h-1zM1 92h1v1h-1zM5 92h1v1h-1zM29 92h1v1h-1zM33 92h1v1h-1zM37 92h1v1h-1zM61 92h1v1h-1zM65 92h1v1h-1zM69 92h1v1h-1zM3 94h1v1h-1zM7 94h1v1h-1zM27 94h1v1h-1zM31 94h1v1h-1zM35 94h1v1h-1zM39 94h1v1h-1zM59 94h1v1h-1zM63 94h1v1h-1zM67 94h1v1h-1zM71 94h1v1h-1zM1 96h1v1h-1zM5 96h1v1h-1zM24 96h1v1h-1zM29 96h1v1h-1zM33 96h1v1h-1zM37 96h1v1h-1zM56 96h1v1h-1zM61 96h1v1h-1zM65 96h1v1h-1zM69 96h1v1h-1zM88 96h1v1h-1zM24 97h3v1h-3zM56 97h3v1h-3zM88 97h2v1h-2zM3 98h1v1h-1zM24 98h3v1h-3zM28 98h1v1h-1zM35 98h1v1h-1zM56 98h3v1h-3zM60 98h1v1h-1zM67 98h1v1h-1zM88 98h2v1h-2zM23 99h8v1h-8zM55 99h8v1h-8zM87 99h3v1h-3zM0 100h1v1h-1zM22 100h3v1h-3zM26 100h3v1h-3zM30 100h3v1h-3zM54 100h3v1h-3zM58 100h3v1h-3zM62 100h3v1h-3zM86 100h3v1h-3zM0 101h3v1h-3zM22 101h13v1h-13zM54 101h13v1h-13zM86 101h4v1h-4zM0 102h3v1h-3zM21 102h2v1h-2zM24 102h3v1h-3zM28 102h3v1h-3zM32 102h3v1h-3zM53 102h2v1h-2zM56 102h3v1h-3zM60 102h3v1h-3zM64 102h3v1h-3zM85 102h2v1h-2zM88 102h2v1h-2zM0 103h3v1h-3zM21 103h14v1h-14zM53 103h14v1h-14zM85 103h5v1h-5zM0 104h1v1h-1zM2 104h1v1h-1zM20 104h1v1h-1zM22 104h3v1h-3zM26 104h3v1h-3zM30 104h3v1h-3zM34 104h1v1h-1zM52 104h1v1h-1zM54 104h3v1h-3zM58 104h3v1h-3zM62 104h3v1h-3zM66 104h1v1h-1zM84 104h1v1h-1zM86 104h3v1h-3zM0 105h2v1h-2zM20 105h14v1h-14zM52 105h14v1h-14zM84 105h6v1h-6zM0 106h2v1h-2zM20 106h3v1h-3zM24 106h3v1h-3zM28 106h3v1h-3zM32 106h2v1h-2zM52 106h3v1h-3zM56 106h3v1h-3zM60 106h3v1h-3zM64 106h2v1h-2zM84 106h3v1h-3zM88 106h2v1h-2zM0 107h1v1h-1zM19 107h14v1h-14zM51 107h14v1h-14zM83 107h7v1h-7zM0 108h1v1h-1zM20 108h1v1h-1zM22 108h3v1h-3zM26 108h3v1h-3zM30 108h3v1h-3zM52 108h1v1h-1zM54 108h3v1h-3zM58 108h3v1h-3zM62 108h3v1h-3zM84 108h1v1h-1zM86 108h3v1h-3zM22 109h10v1h-10zM54 109h10v1h-10zM86 109h4v1h-4zM19 110h1v1h-1zM24 110h3v1h-3zM28 110h3v1h-3zM51 110h1v1h-1zM56 110h3v1h-3zM60 110h3v1h-3zM83 110h1v1h-1zM88 110h2v1h-2zM26 111h5v1h-5zM58 111h5v1h-5zM17 112h1v1h-1zM21 112h1v1h-1zM28 112h1v1h-1zM30 112h1v1h-1zM49 112h1v1h-1zM53 112h1v1h-1zM60 112h1v1h-1zM62 112h1v1h-1zM81 112h1v1h-1zM85 112h1v1h-1zM15 114h1v1h-1zM19 114h1v1h-1zM23 114h1v1h-1zM27 114h1v1h-1zM47 114h1v1h-1zM51 114h1v1h-1zM55 114h1v1h-1zM59 114h1v1h-1zM79 114h1v1h-1zM83 114h1v1h-1zM87 114h1v1h-1zM17 116h1v1h-1zM21 116h1v1h-1zM25 116h1v1h-1zM49 116h1v1h-1zM53 116h1v1h-1zM57 116h1v1h-1zM81 116h1v1h-1zM85 116h1v1h-1zM89 116h1v1h-1zM15 118h1v1h-1zM19 118h1v1h-1zM23 118h1v1h-1zM27 118h1v1h-1zM47 118h1v1h-1zM51 118h1v1h-1zM55 118h1v1h-1zM59 118h1v1h-1zM79 118h1v1h-1zM83 118h1v1h-1zM87 118h1v1h-1zM13 120h1v1h-1zM17 120h1v1h-1zM21 120h1v1h-1zM25 120h1v1h-1zM45 120h1v1h-1zM49 120h1v1h-1zM53 120h1v1h-1zM57 120h1v1h-1zM77 120h1v1h-1zM81 120h1v1h-1zM85 120h1v1h-1zM89 120h1v1h-1zM12 122h1v1h-1zM19 122h1v1h-1zM23 122h1v1h-1zM44 122h1v1h-1zM51 122h1v1h-1zM55 122h1v1h-1zM76 122h1v1h-1zM83 122h1v1h-1zM87 122h1v1h-1zM11 123h4v1h-4zM43 123h4v1h-4zM75 123h4v1h-4zM10 124h3v1h-3zM14 124h3v1h-3zM21 124h1v1h-1zM42 124h3v1h-3zM46 124h3v1h-3zM53 124h1v1h-1zM74 124h3v1h-3zM78 124h3v1h-3zM85 124h1v1h-1zM10 125h9v1h-9zM42 125h9v1h-9zM74 125h9v1h-9zM9 126h2v1h-2zM12 126h3v1h-3zM16 126h3v1h-3zM20 126h1v1h-1zM41 126h2v1h-2zM44 126h3v1h-3zM48 126h3v1h-3zM52 126h1v1h-1zM73 126h2v1h-2zM76 126h3v1h-3zM80 126h3v1h-3zM84 126h1v1h-1zM9 127h14v1h-14zM41 127h14v1h-14zM73 127h14v1h-14zM8 128h1v1h-1zM10 128h3v1h-3zM14 128h3v1h-3zM18 128h3v1h-3zM22 128h1v1h-1zM40 128h1v1h-1zM42 128h3v1h-3zM46 128h3v1h-3zM50 128h3v1h-3zM54 128h1v1h-1zM72 128h1v1h-1zM74 128h3v1h-3zM78 128h3v1h-3zM82 128h3v1h-3zM86 128h1v1h-1zM8 129h14v1h-14zM40 129h14v1h-14zM72 129h14v1h-14zM8 130h3v1h-3zM12 130h3v1h-3zM16 130h3v1h-3zM20 130h2v1h-2zM40 130h3v1h-3zM44 130h3v1h-3zM48 130h3v1h-3zM52 130h2v1h-2zM72 130h3v1h-3zM76 130h3v1h-3zM80 130h3v1h-3zM84 130h2v1h-2zM7 131h14v1h-14zM39 131h14v1h-14zM71 131h14v1h-14zM6 132h3v1h-3zM10 132h3v1h-3zM14 132h3v1h-3zM18 132h3v1h-3zM38 132h3v1h-3zM42 132h3v1h-3zM46 132h3v1h-3zM50 132h3v1h-3zM70 132h3v1h-3zM74 132h3v1h-3zM78 132h3v1h-3zM82 132h3v1h-3zM6 133h14v1h-14zM38 133h14v1h-14zM70 133h14v1h-14zM8 134h3v1h-3zM12 134h3v1h-3zM16 134h3v1h-3zM40 134h3v1h-3zM44 134h3v1h-3zM48 134h3v1h-3zM72 134h3v1h-3zM76 134h3v1h-3zM80 134h3v1h-3zM10 135h9v1h-9zM42 135h9v1h-9zM74 135h9v1h-9zM5 136h1v1h-1zM12 136h1v1h-1zM14 136h3v1h-3zM18 136h1v1h-1zM37 136h1v1h-1zM44 136h1v1h-1zM46 136h3v1h-3zM50 136h1v1h-1zM69 136h1v1h-1zM76 136h1v1h-1zM78 136h3v1h-3zM82 136h1v1h-1zM14 137h4v1h-4zM46 137h4v1h-4zM78 137h4v1h-4zM3 138h1v1h-1zM7 138h1v1h-1zM11 138h1v1h-1zM16 138h2v1h-2zM35 138h1v1h-1zM39 138h1v1h-1zM43 138h1v1h-1zM48 138h2v1h-2zM67 138h1v1h-1zM71 138h1v1h-1zM75 138h1v1h-1zM80 138h2v1h-2zM5 140h1v1h-1zM9 140h1v1h-1zM13 140h1v1h-1zM37 140h1v1h-1zM41 140h1v1h-1zM45 140h1v1h-1zM69 140h1v1h-1zM73 140h1v1h-1zM77 140h1v1h-1zM3 142h1v1h-1zM7 142h1v1h-1zM11 142h1v1h-1zM15 142h1v1h-1zM35 142h1v1h-1zM39 142h1v1h-1zM43 142h1v1h-1zM47 142h1v1h-1zM67 142h1v1h-1zM71 142h1v1h-1zM75 142h1v1h-1zM79 142h1v1h-1zM1 144h1v1h-1zM5 144h1v1h-1zM9 144h1v1h-1zM13 144h1v1h-1zM33 144h1v1h-1zM37 144h1v1h-1zM41 144h1v1h-1zM45 144h1v1h-1zM65 144h1v1h-1zM69 144h1v1h-1zM73 144h1v1h-1zM77 144h1v1h-1zM3 146h1v1h-1zM7 146h1v1h-1zM11 146h1v1h-1zM35 146h1v1h-1zM39 146h1v1h-1zM43 146h1v1h-1zM67 146h1v1h-1zM71 146h1v1h-1zM75 146h1v1h-1zM0 148h1v1h-1zM5 148h1v1h-1zM9 148h1v1h-1zM30 148h3v1h-3zM37 148h1v1h-1zM41 148h1v1h-1zM62 148h3v1h-3zM69 148h1v1h-1zM73 148h1v1h-1zM0 149h3v1h-3zM30 149h5v1h-5zM62 149h5v1h-5zM0 150h3v1h-3zM4 150h1v1h-1zM11 150h1v1h-1zM29 150h2v1h-2zM32 150h3v1h-3zM36 150h1v1h-1zM43 150h1v1h-1zM61 150h2v1h-2zM64 150h3v1h-3zM68 150h1v1h-1zM75 150h1v1h-1zM0 151h7v1h-7zM29 151h10v1h-10zM61 151h10v1h-10zM0 152h1v1h-1zM2 152h3v1h-3zM6 152h3v1h-3zM28 152h1v1h-1zM30 152h3v1h-3zM34 152h3v1h-3zM38 152h3v1h-3zM60 152h1v1h-1zM62 152h3v1h-3zM66 152h3v1h-3zM70 152h3v1h-3zM0 153h10v1h-10zM28 153h14v1h-14zM60 153h14v1h-14zM0 154h3v1h-3zM4 154h3v1h-3zM8 154h2v1h-2zM28 154h3v1h-3zM32 154h3v1h-3zM36 154h3v1h-3zM40 154h2v1h-2zM60 154h3v1h-3zM64 154h3v1h-3zM68 154h3v1h-3zM72 154h2v1h-2zM0 155h9v1h-9zM27 155h14v1h-14zM59 155h14v1h-14zM0 156h1v1h-1zM2 156h3v1h-3zM6 156h3v1h-3zM26 156h3v1h-3zM30 156h3v1h-3zM34 156h3v1h-3zM38 156h3v1h-3zM58 156h3v1h-3zM62 156h3v1h-3zM66 156h3v1h-3zM70 156h3v1h-3zM0 157h8v1h-8zM26 157h14v1h-14zM58 157h14v1h-14zM0 158h3v1h-3zM4 158h3v1h-3zM25 158h2v1h-2zM28 158h3v1h-3zM32 158h3v1h-3zM36 158h3v1h-3zM57 158h2v1h-2zM60 158h3v1h-3zM64 158h3v1h-3zM68 158h3v1h-3zM89 158h1v1h-1zM0 159h7v1h-7zM26 159h13v1h-13zM58 159h13v1h-13z"/><path fill="#7b2d9f" d="M24 0h1v1h-1zM56 0h1v1h-1zM88 0h1v1h-1zM24 1h3v1h-3zM56 1h3v1h-3zM88 1h2v1h-2zM24 2h3v1h-3zM28 2h1v1h-1zM56 2h3v1h-3zM60 2h1v1h-1zM88 2h2v1h-2zM23 3h8v1h-8zM55 3h8v1h-8zM87 3h3v1h-3zM0 4h1v1h-1zM22 4h3v1h-3zM26 4h3v1h-3zM30 4h3v1h-3zM54 4h3v1h-3zM58 4h3v1h-3zM62 4h3v1h-3zM86 4h3v1h-3zM0 5h3v1h-3zM22 5h13v1h-13zM54 5h13v1h-13zM86 5h4v1h-4zM0 6h3v1h-3zM21 6h2v1h-2zM24 6h3v1h-3zM28 6h3v1h-3zM32 6h3v1h-3zM53 6h2v1h-2zM56 6h3v1h-3zM60 6h3v1h-3zM64 6h3v1h-3zM85 6h2v1h-2zM88 6h2v1h-2zM0 7h3v1h-3zM21 7h14v1h-14zM53 7h14v1h-14zM85 7h5v1h-5zM0 8h1v1h-1zM2 8h1v1h-1zM20 8h1v1h-1zM22 8h3v1h-3zM26 8h3v1h-3zM30 8h3v1h-3zM34 8h1v1h-1zM52 8h1v1h-1zM54 8h3v1h-3zM58 8h3v1h-3zM62 8h3v1h-3zM66 8h1v1h-1zM84 8h1v1h-1zM86 8h3v1h-3zM0 9h2v1h-2zM20 9h14v1h-14zM52 9h14v1h-14zM84 9h6v1h-6zM0 10h2v1h-2zM20 10h3v1h-3zM24 10h3v1h-3zM28 10h3v1h-3zM32 10h2v1h-2zM52 10h3v1h-3zM56 10h3v1h-3zM60 10h3v1h-3zM64 10h2v1h-2zM84 10h3v1h-3zM88 10h2v1h-2zM0 11h1v1h-1zM19 11h14v1h-14zM51 11h14v1h-14zM83 11h7v1h-7zM0 12h1v1h-1zM20 12h1v1h-1zM22 12h3v1h-3zM26 12h3v1h-3zM30 12h3v1h-3zM52 12h1v1h-1zM54 12h3v1h-3zM58 12h3v1h-3zM62 12h3v1h-3zM84 12h1v1h-1zM86 12h3v1h-3zM22 13h10v1h-10zM54 13h10v1h-10zM86 13h4v1h-4zM24 14h3v1h-3zM28 14h3v1h-3zM56 14h3v1h-3zM60 14h3v1h-3zM88 14h2v1h-2zM26 15h5v1h-5zM58 15h5v1h-5zM28 16h1v1h-1zM30 16h1v1h-1zM60 16h1v1h-1zM62 16h1v1h-1zM12 26h1v1h-1zM44 26h1v1h-1zM76 26h1v1h-1zM11 27h4v1h-4zM43 27h4v1h-4zM75 27h4v1h-4zM10 28h3v1h-3zM14 28h3v1h-3zM42 28h3v1h-3zM46 28h3v1h-3zM74 28h3v1h-3zM78 28h3v1h-3zM10 29h9v1h-9zM42 29h9v1h-9zM74 29h9v1h-9zM9 30h2v1h-2zM12 30h3v1h-3zM16 30h3v1h-3zM20 30h1v1h-1zM41 30h2v1h-2zM44 30h3v1h-3zM48 30h3v1h-3zM52 30h1v1h-1zM73 30h2v1h-2zM76 30h3v1h-3zM80 30h3v1h-3zM84 30h1v1h-1zM9 31h14v1h-14zM41 31h14v1h-14zM73 31h14v1h-14zM8 32h1v1h-1zM10 32h3v1h-3zM14 32h3v1h-3zM18 32h3v1h-3zM22 32h1v1h-1zM40 32h1v1h-1zM42 32h3v1h-3zM46 32h3v1h-3zM50 32h3v1h-3zM54 32h1v1h-1zM72 32h1v1h-1zM74 32h3v1h-3zM78 32h3v1h-3zM82 32h3v1h-3zM86 32h1v1h-1zM8 33h14v1h-14zM40 33h14v1h-14zM72 33h14v1h-14zM8 34h3v1h-3zM12 34h3v1h-3zM16 34h3v1h-3zM20 34h2v1h-2zM40 34h3v1h-3zM44 34h3v1h-3zM48 34h3v1h-3zM52 34h2v1h-2zM72 34h3v1h-3zM76 34h3v1h-3zM80 34h3v1h-3zM84 34h2v1h-2zM7 35h14v1h-14zM39 35h14v1h-14zM71 35h14v1h-14zM6 36h3v1h-3zM10 36h3v1h-3zM14 36h3v1h-3zM18 36h3v1h-3zM38 36h3v1h-3zM42 36h3v1h-3zM46 36h3v1h-3zM50 36h3v1h-3zM70 36h3v1h-3zM74 36h3v1h-3zM78 36h3v1h-3zM82 36h3v1h-3zM6 37h14v1h-14zM38 37h14v1h-14zM70 37h14v1h-14zM8 38h3v1h-3zM12 38h3v1h-3zM16 38h3v1h-3zM40 38h3v1h-3zM44 38h3v1h-3zM48 38h3v1h-3zM72 38h3v1h-3zM76 38h3v1h-3zM80 38h3v1h-3zM10 39h9v1h-9zM42 39h9v1h-9zM74 39h9v1h-9zM12 40h1v1h-1zM14 40h3v1h-3zM18 40h1v1h-1zM44 40h1v1h-1zM46 40h3v1h-3zM50 40h1v1h-1zM76 40h1v1h-1zM78 40h3v1h-3zM82 40h1v1h-1zM14 41h4v1h-4zM46 41h4v1h-4zM78 41h4v1h-4zM16 42h2v1h-2zM48 42h2v1h-2zM80 42h2v1h-2zM0 52h1v1h-1zM30 52h3v1h-3zM62 52h3v1h-3zM0 53h3v1h-3zM30 53h5v1h-5zM62 53h5v1h-5zM0 54h3v1h-3zM4 54h1v1h-1zM29 54h2v1h-2zM32 54h3v1h-3zM36 54h1v1h-1zM61 54h2v1h-2zM64 54h3v1h-3zM68 54h1v1h-1zM0 55h7v1h-7zM29 55h10v1h-10zM61 55h10v1h-10zM0 56h1v1h-1zM2 56h3v1h-3zM6 56h3v1h-3zM28 56h1v1h-1zM30 56h3v1h-3zM34 56h3v1h-3zM38 56h3v1h-3zM60 56h1v1h-1zM62 56h3v1h-3zM66 56h3v1h-3zM70 56h3v1h-3zM0 57h10v1h-10zM28 57h14v1h-14zM60 57h14v1h-14zM0 58h3v1h-3zM4 58h3v1h-3zM8 58h2v1h-2zM28 58h3v1h-3zM32 58h3v1h-3zM36 58h3v1h-3zM40 58h2v1h-2zM60 58h3v1h-3zM64 58h3v1h-3zM68 58h3v1h-3zM72 58h2v1h-2zM0 59h9v1h-9zM27 59h14v1h-14zM59 59h14v1h-14zM0 60h1v1h-1zM2 60h3v1h-3zM6 60h3v1h-3zM26 60h3v1h-3zM30 60h3v1h-3zM34 60h3v1h-3zM38 60h3v1h-3zM58 60h3v1h-3zM62 60h3v1h-3zM66 60h3v1h-3zM70 60h3v1h-3zM0 61h8v1h-8zM26 61h14v1h-14zM58 61h14v1h-14zM0 62h3v1h-3zM4 62h3v1h-3zM25 62h2v1h-2zM28 62h3v1h-3zM32 62h3v1h-3zM36 62h3v1h-3zM57 62h2v1h-2zM60 62h3v1h-3zM64 62h3v1h-3zM68 62h3v1h-3zM89 62h1v1h-1zM0 63h7v1h-7zM26 63h13v1h-13zM58 63h13v1h-13zM0 64h1v1h-1zM2 64h3v1h-3zM6 64h1v1h-1zM28 64h1v1h-1zM30 64h3v1h-3zM34 64h3v1h-3zM38 64h1v1h-1zM60 64h1v1h-1zM62 64h3v1h-3zM66 64h3v1h-3zM70 64h1v1h-1zM0 65h6v1h-6zM30 65h8v1h-8zM62 65h8v1h-8zM0 66h3v1h-3zM4 66h2v1h-2zM32 66h3v1h-3zM36 66h2v1h-2zM64 66h3v1h-3zM68 66h2v1h-2zM2 67h3v1h-3zM34 67h3v1h-3zM66 67h3v1h-3zM4 68h1v1h-1zM36 68h1v1h-1zM68 68h1v1h-1zM18 77h1v1h-1zM50 77h1v1h-1zM82 77h1v1h-1zM17 78h2v1h-2zM20 78h1v1h-1zM49 78h2v1h-2zM52 78h1v1h-1zM81 78h2v1h-2zM84 78h1v1h-1zM17 79h6v1h-6zM49 79h6v1h-6zM81 79h6v1h-6zM16 80h1v1h-1zM18 80h3v1h-3zM22 80h3v1h-3zM48 80h1v1h-1zM50 80h3v1h-3zM54 80h3v1h-3zM80 80h1v1h-1zM82 80h3v1h-3zM86 80h3v1h-3zM16 81h11v1h-11zM48 81h11v1h-11zM80 81h10v1h-10zM16 82h3v1h-3zM20 82h3v1h-3zM24 82h3v1h-3zM28 82h1v1h-1zM48 82h3v1h-3zM52 82h3v1h-3zM56 82h3v1h-3zM60 82h1v1h-1zM80 82h3v1h-3zM84 82h3v1h-3zM88 82h2v1h-2zM15 83h14v1h-14zM47 83h14v1h-14zM79 83h11v1h-11zM14 84h3v1h-3zM18 84h3v1h-3zM22 84h3v1h-3zM26 84h3v1h-3zM46 84h3v1h-3zM50 84h3v1h-3zM54 84h3v1h-3zM58 84h3v1h-3zM78 84h3v1h-3zM82 84h3v1h-3zM86 84h3v1h-3zM14 85h14v1h-14zM46 85h14v1h-14zM78 85h12v1h-12zM13 86h2v1h-2zM16 86h3v1h-3zM20 86h3v1h-3zM24 86h3v1h-3zM45 86h2v1h-2zM48 86h3v1h-3zM52 86h3v1h-3zM56 86h3v1h-3zM77 86h2v1h-2zM80 86h3v1h-3zM84 86h3v1h-3zM88 86h2v1h-2zM13 87h14v1h-14zM45 87h14v1h-14zM77 87h13v1h-13zM12 88h1v1h-1zM14 88h3v1h-3zM18 88h3v1h-3zM22 88h3v1h-3zM26 88h1v1h-1zM44 88h1v1h-1zM46 88h3v1h-3zM50 88h3v1h-3zM54 88h3v1h-3zM58 88h1v1h-1zM76 88h1v1h-1zM78 88h3v1h-3zM82 88h3v1h-3zM86 88h3v1h-3zM14 89h12v1h-12zM46 89h12v1h-12zM78 89h12v1h-12zM16 90h3v1h-3zM20 90h3v1h-3zM24 90h2v1h-2zM48 90h3v1h-3zM52 90h3v1h-3zM56 90h2v1h-2zM80 90h3v1h-3zM84 90h3v1h-3zM88 90h2v1h-2zM18 91h7v1h-7zM50 91h7v1h-7zM82 91h7v1h-7zM20 92h1v1h-1zM22 92h3v1h-3zM52 92h1v1h-1zM54 92h3v1h-3zM84 92h1v1h-1zM86 92h3v1h-3zM22 93h2v1h-2zM54 93h2v1h-2zM86 93h2v1h-2zM5 103h2v1h-2zM37 103h2v1h-2zM69 103h2v1h-2zM4 104h1v1h-1zM6 104h3v1h-3zM36 104h1v1h-1zM38 104h3v1h-3zM68 104h1v1h-1zM70 104h3v1h-3zM4 105h7v1h-7zM36 105h7v1h-7zM68 105h7v1h-7zM4 106h3v1h-3zM8 106h3v1h-3zM12 106h1v1h-1zM36 106h3v1h-3zM40 106h3v1h-3zM44 106h1v1h-1zM68 106h3v1h-3zM72 106h3v1h-3zM76 106h1v1h-1zM3 107h12v1h-12zM35 107h12v1h-12zM67 107h12v1h-12zM2 108h3v1h-3zM6 108h3v1h-3zM10 108h3v1h-3zM14 108h3v1h-3zM34 108h3v1h-3zM38 108h3v1h-3zM42 108h3v1h-3zM46 108h3v1h-3zM66 108h3v1h-3zM70 108h3v1h-3zM74 108h3v1h-3zM78 108h3v1h-3zM2 109h14v1h-14zM34 109h14v1h-14zM66 109h14v1h-14zM1 110h2v1h-2zM4 110h3v1h-3zM8 110h3v1h-3zM12 110h3v1h-3zM33 110h2v1h-2zM36 110h3v1h-3zM40 110h3v1h-3zM44 110h3v1h-3zM65 110h2v1h-2zM68 110h3v1h-3zM72 110h3v1h-3zM76 110h3v1h-3zM1 111h14v1h-14zM33 111h14v1h-14zM65 111h14v1h-14zM0 112h1v1h-1zM2 112h3v1h-3zM6 112h3v1h-3zM10 112h3v1h-3zM14 112h1v1h-1zM32 112h1v1h-1zM34 112h3v1h-3zM38 112h3v1h-3zM42 112h3v1h-3zM46 112h1v1h-1zM64 112h1v1h-1zM66 112h3v1h-3zM70 112h3v1h-3zM74 112h3v1h-3zM78 112h1v1h-1zM0 113h14v1h-14zM32 113h14v1h-14zM64 113h14v1h-14zM0 114h3v1h-3zM4 114h3v1h-3zM8 114h3v1h-3zM12 114h2v1h-2zM32 114h3v1h-3zM36 114h3v1h-3zM40 114h3v1h-3zM44 114h2v1h-2zM64 114h3v1h-3zM68 114h3v1h-3zM72 114h3v1h-3zM76 114h2v1h-2zM2 115h11v1h-11zM34 115h11v1h-11zM66 115h11v1h-11zM4 116h1v1h-1zM6 116h3v1h-3zM10 116h3v1h-3zM36 116h1v1h-1zM38 116h3v1h-3zM42 116h3v1h-3zM68 116h1v1h-1zM70 116h3v1h-3zM74 116h3v1h-3zM6 117h6v1h-6zM38 117h6v1h-6zM70 117h6v1h-6zM8 118h3v1h-3zM40 118h3v1h-3zM72 118h3v1h-3zM10 119h1v1h-1zM42 119h1v1h-1zM74 119h1v1h-1zM24 128h1v1h-1zM56 128h1v1h-1zM88 128h1v1h-1zM24 129h3v1h-3zM56 129h3v1h-3zM88 129h2v1h-2zM24 130h3v1h-3zM28 130h1v1h-1zM56 130h3v1h-3zM60 130h1v1h-1zM88 130h2v1h-2zM23 131h8v1h-8zM55 131h8v1h-8zM87 131h3v1h-3zM0 132h1v1h-1zM22 132h3v1h-3zM26 132h3v1h-3zM30 132h3v1h-3zM54 132h3v1h-3zM58 132h3v1h-3zM62 132h3v1h-3zM86 132h3v1h-3zM0 133h3v1h-3zM22 133h13v1h-13zM54 133h13v1h-13zM86 133h4v1h-4zM0 134h3v1h-3zM21 134h2v1h-2zM24 134h3v1h-3zM28 134h3v1h-3zM32 134h3v1h-3zM53 134h2v1h-2zM56 134h3v1h-3zM60 134h3v1h-3zM64 134h3v1h-3zM85 134h2v1h-2zM88 134h2v1h-2zM0 135h3v1h-3zM21 135h14v1h-14zM53 135h14v1h-14zM85 135h5v1h-5zM0 136h1v1h-1zM2 136h1v1h-1zM20 136h1v1h-1zM22 136h3v1h-3zM26 136h3v1h-3zM30 136h3v1h-3zM34 136h1v1h-1zM52 136h1v1h-1zM54 136h3v1h-3zM58 136h3v1h-3zM62 136h3v1h-3zM66 136h1v1h-1zM84 136h1v1h-1zM86 136h3v1h-3zM0 137h2v1h-2zM20 137h14v1h-14zM52 137h14v1h-14zM84 137h6v1h-6zM0 138h2v1h-2zM20 138h3v1h-3zM24 138h3v1h-3zM28 138h3v1h-3zM32 138h2v1h-2zM52 138h3v1h-3zM56 138h3v1h-3zM60 138h3v1h-3zM64 138h2v1h-2zM84 138h3v1h-3zM88 138h2v1h-2zM0 139h1v1h-1zM19 139h14v1h-14zM51 139h14v1h-14zM83 139h7v1h-7zM0 140h1v1h-1zM20 140h1v1h-1zM22 140h3v1h-3zM26 140h3v1h-3zM30 140h3v1h-3zM52 140h1v1h-1zM54 140h3v1h-3zM58 140h3v1h-3zM62 140h3v1h-3zM84 140h1v1h-1zM86 140h3v1h-3zM22 141h10v1h-10zM54 141h10v1h-10zM86 141h4v1h-4zM24 142h3v1h-3zM28 142h3v1h-3zM56 142h3v1h-3zM60 142h3v1h-3zM88 142h2v1h-2zM26 143h5v1h-5zM58 143h5v1h-5zM28 144h1v1h-1zM30 144h1v1h-1zM60 144h1v1h-1zM62 144h1v1h-1zM12 154h1v1h-1zM44 154h1v1h-1zM76 154h1v1h-1zM11 155h4v1h-4zM43 155h4v1h-4zM75 155h4v1h-4zM10 156h3v1h-3zM14 156h3v1h-3zM42 156h3v1h-3zM46 156h3v1h-3zM74 156h3v1h-3zM78 156h3v1h-3zM10 157h9v1h-9zM42 157h9v1h-9zM74 157h9v1h-9zM9 158h2v1h-2zM12 158h3v1h-3zM16 158h3v1h-3zM20 158h1v1h-1zM41 158h2v1h-2zM44 158h3v1h-3zM48 158h3v1h-3zM52 158h1v1h-1zM73 158h2v1h-2zM76 158h3v1h-3zM80 158h3v1h-3zM84 158h1v1h-1zM9 159h14v1h-14zM41 159h14v1h-14zM73 159h14v1h-14z"/><path fill="#ee3358" d="M0 0h1v1h-1zM2 0h3v1h-3zM6 0h1v1h-1zM28 0h1v1h-1zM30 0h3v1h-3zM34 0h3v1h-3zM38 0h1v1h-1zM60 0h1v1h-1zM62 0h3v1h-3zM66 0h3v1h-3zM70 0h1v1h-1zM0 1h6v1h-6zM30 1h8v1h-8zM62 1h8v1h-8zM0 2h3v1h-3zM4 2h2v1h-2zM32 2h3v1h-3zM36 2h2v1h-2zM64 2h3v1h-3zM68 2h2v1h-2zM2 3h3v1h-3zM34 3h3v1h-3zM66 3h3v1h-3zM4 4h1v1h-1zM36 4h1v1h-1zM68 4h1v1h-1zM18 13h1v1h-1zM50 13h1v1h-1zM82 13h1v1h-1zM17 14h2v1h-2zM20 14h1v1h-1zM49 14h2v1h-2zM52 14h1v1h-1zM81 14h2v1h-2zM84 14h1v1h-1zM17 15h6v1h-6zM49 15h6v1h-6zM81 15h6v1h-6zM16 16h1v1h-1zM18 16h3v1h-3zM22 16h3v1h-3zM48 16h1v1h-1zM50 16h3v1h-3zM54 16h3v1h-3zM80 16h1v1h-1zM82 16h3v1h-3zM86 16h3v1h-3zM16 17h11v1h-11zM48 17h11v1h-11zM80 17h10v1h-10zM16 18h3v1h-3zM20 18h3v1h-3zM24 18h3v1h-3zM28 18h1v1h-1zM48 18h3v1h-3zM52 18h3v1h-3zM56 18h3v1h-3zM60 18h1v1h-1zM80 18h3v1h-3zM84 18h3v1h-3zM88 18h2v1h-2zM15 19h14v1h-14zM47 19h14v1h-14zM79 19h11v1h-11zM14 20h3v1h-3zM18 20h3v1h-3zM22 20h3v1h-3zM26 20h3v1h-3zM46 20h3v1h-3zM50 20h3v1h-3zM54 20h3v1h-3zM58 20h3v1h-3zM78 20h3v1h-3zM82 20h3v1h-3zM86 20h3v1h-3zM14 21h14v1h-14zM46 21h14v1h-14zM78 21h12v1h-12zM13 22h2v1h-2zM16 22h3v1h-3zM20 22h3v1h-3zM24 22h3v1h-3zM45 22h2v1h-2zM48 22h3v1h-3zM52 22h3v1h-3zM56 22h3v1h-3zM77 22h2v1h-2zM80 22h3v1h-3zM84 22h3v1h-3zM88 22h2v1h-2zM13 23h14v1h-14zM45 23h14v1h-14zM77 23h13v1h-13zM12 24h1v1h-1zM14 24h3v1h-3zM18 24h3v1h-3zM22 24h3v1h-3zM26 24h1v1h-1zM44 24h1v1h-1zM46 24h3v1h-3zM50 24h3v1h-3zM54 24h3v1h-3zM58 24h1v1h-1zM76 24h1v1h-1zM78 24h3v1h-3zM82 24h3v1h-3zM86 24h3v1h-3zM14 25h12v1h-12zM46 25h12v1h-12zM78 25h12v1h-12zM16 26h3v1h-3zM20 26h3v1h-3zM24 26h2v1h-2zM48 26h3v1h-3zM52 26h3v1h-3zM56 26h2v1h-2zM80 26h3v1h-3zM84 26h3v1h-3zM88 26h2v1h-2zM18 27h7v1h-7zM50 27h7v1h-7zM82 27h7v1h-7zM20 28h1v1h-1zM22 28h3v1h-3zM52 28h1v1h-1zM54 28h3v1h-3zM84 28h1v1h-1zM86 28h3v1h-3zM22 29h2v1h-2zM54 29h2v1h-2zM86 29h2v1h-2zM5 39h2v1h-2zM37 39h2v1h-2zM69 39h2v1h-2zM4 40h1v1h-1zM6 40h3v1h-3zM36 40h1v1h-1zM38 40h3v1h-3zM68 40h1v1h-1zM70 40h3v1h-3zM4 41h7v1h-7zM36 41h7v1h-7zM68 41h7v1h-7zM4 42h3v1h-3zM8 42h3v1h-3zM12 42h1v1h-1zM36 42h3v1h-3zM40 42h3v1h-3zM44 42h1v1h-1zM68 42h3v1h-3zM72 42h3v1h-3zM76 42h1v1h-1zM3 43h12v1h-12zM35 43h12v1h-12zM67 43h12v1h-12zM2 44h3v1h-3zM6 44h3v1h-3zM10 44h3v1h-3zM14 44h3v1h-3zM34 44h3v1h-3zM38 44h3v1h-3zM42 44h3v1h-3zM46 44h3v1h-3zM66 44h3v1h-3zM70 44h3v1h-3zM74 44h3v1h-3zM78 44h3v1h-3zM2 45h14v1h-14zM34 45h14v1h-14zM66 45h14v1h-14zM1 46h2v1h-2zM4 46h3v1h-3zM8 46h3v1h-3zM12 46h3v1h-3zM33 46h2v1h-2zM36 46h3v1h-3zM40 46h3v1h-3zM44 46h3v1h-3zM65 46h2v1h-2zM68 46h3v1h-3zM72 46h3v1h-3zM76 46h3v1h-3zM1 47h14v1h-14zM33 47h14v1h-14zM65 47h14v1h-14zM0 48h1v1h-1zM2 48h3v1h-3zM6 48h3v1h-3zM10 48h3v1h-3zM14 48h1v1h-1zM32 48h1v1h-1zM34 48h3v1h-3zM38 48h3v1h-3zM42 48h3v1h-3zM46 48h1v1h-1zM64 48h1v1h-1zM66 48h3v1h-3zM70 48h3v1h-3zM74 48h3v1h-3zM78 48h1v1h-1zM0 49h14v1h-14zM32 49h14v1h-14zM64 49h14v1h-14zM0 50h3v1h-3zM4 50h3v1h-3zM8 50h3v1h-3zM12 50h2v1h-2zM32 50h3v1h-3zM36 50h3v1h-3zM40 50h3v1h-3zM44 50h2v1h-2zM64 50h3v1h-3zM68 50h3v1h-3zM72 50h3v1h-3zM76 50h2v1h-2zM2 51h11v1h-11zM34 51h11v1h-11zM66 51h11v1h-11zM4 52h1v1h-1zM6 52h3v1h-3zM10 52h3v1h-3zM36 52h1v1h-1zM38 52h3v1h-3zM42 52h3v1h-3zM68 52h1v1h-1zM70 52h3v1h-3zM74 52h3v1h-3zM6 53h6v1h-6zM38 53h6v1h-6zM70 53h6v1h-6zM8 54h3v1h-3zM40 54h3v1h-3zM72 54h3v1h-3zM10 55h1v1h-1zM42 55h1v1h-1zM74 55h1v1h-1zM24 64h1v1h-1zM56 64h1v1h-1zM88 64h1v1h-1zM24 65h3v1h-3zM56 65h3v1h-3zM88 65h2v1h-2zM24 66h3v1h-3zM28 66h1v1h-1zM56 66h3v1h-3zM60 66h1v1h-1zM88 66h2v1h-2zM23 67h8v1h-8zM55 67h8v1h-8zM87 67h3v1h-3zM0 68h1v1h-1zM22 68h3v1h-3zM26 68h3v1h-3zM30 68h3v1h-3zM54 68h3v1h-3zM58 68h3v1h-3zM62 68h3v1h-3zM86 68h3v1h-3zM0 69h3v1h-3zM22 69h13v1h-13zM54 69h13v1h-13zM86 69h4v1h-4zM0 70h3v1h-3zM21 70h2v1h-2zM24 70h3v1h-3zM28 70h3v1h-3zM32 70h3v1h-3zM53 70h2v1h-2zM56 70h3v1h-3zM60 70h3v1h-3zM64 70h3v1h-3zM85 70h2v1h-2zM88 70h2v1h-2zM0 71h3v1h-3zM21 71h14v1h-14zM53 71h14v1h-14zM85 71h5v1h-5zM0 72h1v1h-1zM2 72h1v1h-1zM20 72h1v1h-1zM22 72h3v1h-3zM26 72h3v1h-3zM30 72h3v1h-3zM34 72h1v1h-1zM52 72h1v1h-1zM54 72h3v1h-3zM58 72h3v1h-3zM62 72h3v1h-3zM66 72h1v1h-1zM84 72h1v1h-1zM86 72h3v1h-3zM0 73h2v1h-2zM20 73h14v1h-14zM52 73h14v1h-14zM84 73h6v1h-6zM0 74h2v1h-2zM20 74h3v1h-3zM24 74h3v1h-3zM28 74h3v1h-3zM32 74h2v1h-2zM52 74h3v1h-3zM56 74h3v1h-3zM60 74h3v1h-3zM64 74h2v1h-2zM84 74h3v1h-3zM88 74h2v1h-2zM0 75h1v1h-1zM19 75h14v1h-14zM51 75h14v1h-14zM83 75h7v1h-7zM0 76h1v1h-1zM20 76h1v1h-1zM22 76h3v1h-3zM26 76h3v1h-3zM30 76h3v1h-3zM52 76h1v1h-1zM54 76h3v1h-3zM58 76h3v1h-3zM62 76h3v1h-3zM84 76h1v1h-1zM86 76h3v1h-3zM22 77h10v1h-10zM54 77h10v1h-10zM86 77h4v1h-4zM24 78h3v1h-3zM28 78h3v1h-3zM56 78h3v1h-3zM60 78h3v1h-3zM88 78h2v1h-2zM26 79h5v1h-5zM58 79h5v1h-5zM28 80h1v1h-1zM30 80h1v1h-1zM60 80h1v1h-1zM62 80h1v1h-1zM12 90h1v1h-1zM44 90h1v1h-1zM76 90h1v1h-1zM11 91h4v1h-4zM43 91h4v1h-4zM75 91h4v1h-4zM10 92h3v1h-3zM14 92h3v1h-3zM42 92h3v1h-3zM46 92h3v1h-3zM74 92h3v1h-3zM78 92h3v1h-3zM10 93h9v1h-9zM42 93h9v1h-9zM74 93h9v1h-9zM9 94h2v1h-2zM12 94h3v1h-3zM16 94h3v1h-3zM20 94h1v1h-1zM41 94h2v1h-2zM44 94h3v1h-3zM48 94h3v1h-3zM52 94h1v1h-1zM73 94h2v1h-2zM76 94h3v1h-3zM80 94h3v1h-3zM84 94h1v1h-1zM9 95h14v1h-14zM41 95h14v1h-14zM73 95h14v1h-14zM8 96h1v1h-1zM10 96h3v1h-3zM14 96h3v1h-3zM18 96h3v1h-3zM22 96h1v1h-1zM40 96h1v1h-1zM42 96h3v1h-3zM46 96h3v1h-3zM50 96h3v1h-3zM54 96h1v1h-1zM72 96h1v1h-1zM74 96h3v1h-3zM78 96h3v1h-3zM82 96h3v1h-3zM86 96h1v1h-1zM8 97h14v1h-14zM40 97h14v1h-14zM72 97h14v1h-14zM8 98h3v1h-3zM12 98h3v1h-3zM16 98h3v1h-3zM20 98h2v1h-2zM40 98h3v1h-3zM44 98h3v1h-3zM48 98h3v1h-3zM52 98h2v1h-2zM72 98h3v1h-3zM76 98h3v1h-3zM80 98h3v1h-3zM84 98h2v1h-2zM7 99h14v1h-14zM39 99h14v1h-14zM71 99h14v1h-14zM6 100h3v1h-3zM10 100h3v1h-3zM14 100h3v1h-3zM18 100h3v1h-3zM38 100h3v1h-3zM42 100h3v1h-3zM46 100h3v1h-3zM50 100h3v1h-3zM70 100h3v1h-3zM74 100h3v1h-3zM78 100h3v1h-3zM82 100h3v1h-3zM6 101h14v1h-14zM38 101h14v1h-14zM70 101h14v1h-14zM8 102h3v1h-3zM12 102h3v1h-3zM16 102h3v1h-3zM40 102h3v1h-3zM44 102h3v1h-3zM48 102h3v1h-3zM72 102h3v1h-3zM76 102h3v1h-3zM80 102h3v1h-3zM10 103h9v1h-9zM42 103h9v1h-9zM74 103h9v1h-9zM12 104h1v1h-1zM14 104h3v1h-3zM18 104h1v1h-1zM44 104h1v1h-1zM46 104h3v1h-3zM50 104h1v1h-1zM76 104h1v1h-1zM78 104h3v1h-3zM82 104h1v1h-1zM14 105h4v1h-4zM46 105h4v1h-4zM78 105h4v1h-4zM16 106h2v1h-2zM48 106h2v1h-2zM80 106h2v1h-2zM0 116h1v1h-1zM30 116h3v1h-3zM62 116h3v1h-3zM0 117h3v1h-3zM30 117h5v1h-5zM62 117h5v1h-5zM0 118h3v1h-3zM4 118h1v1h-1zM29 118h2v1h-2zM32 118h3v1h-3zM36 118h1v1h-1zM61 118h2v1h-2zM64 118h3v1h-3zM68 118h1v1h-1zM0 119h7v1h-7zM29 119h10v1h-10zM61 119h10v1h-10zM0 120h1v1h-1zM2 120h3v1h-3zM6 120h3v1h-3zM28 120h1v1h-1zM30 120h3v1h-3zM34 120h3v1h-3zM38 120h3v1h-3zM60 120h1v1h-1zM62 120h3v1h-3zM66 120h3v1h-3zM70 120h3v1h-3zM0 121h10v1h-10zM28 121h14v1h-14zM60 121h14v1h-14zM0 122h3v1h-3zM4 122h3v1h-3zM8 122h2v1h-2zM28 122h3v1h-3zM32 122h3v1h-3zM36 122h3v1h-3zM40 122h2v1h-2zM60 122h3v1h-3zM64 122h3v1h-3zM68 122h3v1h-3zM72 122h2v1h-2zM0 123h9v1h-9zM27 123h14v1h-14zM59 123h14v1h-14zM0 124h1v1h-1zM2 124h3v1h-3zM6 124h3v1h-3zM26 124h3v1h-3zM30 124h3v1h-3zM34 124h3v1h-3zM38 124h3v1h-3zM58 124h3v1h-3zM62 124h3v1h-3zM66 124h3v1h-3zM70 124h3v1h-3zM0 125h8v1h-8zM26 125h14v1h-14zM58 125h14v1h-14zM0 126h3v1h-3zM4 126h3v1h-3zM25 126h2v1h-2zM28 126h3v1h-3zM32 126h3v1h-3zM36 126h3v1h-3zM57 126h2v1h-2zM60 126h3v1h-3zM64 126h3v1h-3zM68 126h3v1h-3zM89 126h1v1h-1zM0 127h7v1h-7zM26 127h13v1h-13zM58 127h13v1h-13zM0 128h1v1h-1zM2 128h3v1h-3zM6 128h1v1h-1zM28 128h1v1h-1zM30 128h3v1h-3zM34 128h3v1h-3zM38 128h1v1h-1zM60 128h1v1h-1zM62 128h3v1h-3zM66 128h3v1h-3zM70 128h1v1h-1zM0 129h6v1h-6zM30 129h8v1h-8zM62 129h8v1h-8zM0 130h3v1h-3zM4 130h2v1h-2zM32 130h3v1h-3zM36 130h2v1h-2zM64 130h3v1h-3zM68 130h2v1h-2zM2 131h3v1h-3zM34 131h3v1h-3zM66 131h3v1h-3zM4 132h1v1h-1zM36 132h1v1h-1zM68 132h1v1h-1zM18 141h1v1h-1zM50 141h1v1h-1zM82 141h1v1h-1zM17 142h2v1h-2zM20 142h1v1h-1zM49 142h2v1h-2zM52 142h1v1h-1zM81 142h2v1h-2zM84 142h1v1h-1zM17 143h6v1h-6zM49 143h6v1h-6zM81 143h6v1h-6zM16 144h1v1h-1zM18 144h3v1h-3zM22 144h3v1h-3zM48 144h1v1h-1zM50 144h3v1h-3zM54 144h3v1h-3zM80 144h1v1h-1zM82 144h3v1h-3zM86 144h3v1h-3zM16 145h11v1h-11zM48 145h11v1h-11zM80 145h10v1h-10zM16 146h3v1h-3zM20 146h3v1h-3zM24 146h3v1h-3zM28 146h1v1h-1zM48 146h3v1h-3zM52 146h3v1h-3zM56 146h3v1h-3zM60 146h1v1h-1zM80 146h3v1h-3zM84 146h3v1h-3zM88 146h2v1h-2zM15 147h14v1h-14zM47 147h14v1h-14zM79 147h11v1h-11zM14 148h3v1h-3zM18 148h3v1h-3zM22 148h3v1h-3zM26 148h3v1h-3zM46 148h3v1h-3zM50 148h3v1h-3zM54 148h3v1h-3zM58 148h3v1h-3zM78 148h3v1h-3zM82 148h3v1h-3zM86 148h3v1h-3zM14 149h14v1h-14zM46 149h14v1h-14zM78 149h12v1h-12zM13 150h2v1h-2zM16 150h3v1h-3zM20 150h3v1h-3zM24 150h3v1h-3zM45 150h2v1h-2zM48 150h3v1h-3zM52 150h3v1h-3zM56 150h3v1h-3zM77 150h2v1h-2zM80 150h3v1h-3zM84 150h3v1h-3zM88 150h2v1h-2zM13 151h14v1h-14zM45 151h14v1h-14zM77 151h13v1h-13zM12 152h1v1h-1zM14 152h3v1h-3zM18 152h3v1h-3zM22 152h3v1h-3zM26 152h1v1h-1zM44 152h1v1h-1zM46 152h3v1h-3zM50 152h3v1h-3zM54 152h3v1h-3zM58 152h1v1h-1zM76 152h1v1h-1zM78 152h3v1h-3zM82 152h3v1h-3zM86 152h3v1h-3zM14 153h12v1h-12zM46 153h12v1h-12zM78 153h12v1h-12zM16 154h3v1h-3zM20 154h3v1h-3zM24 154h2v1h-2zM48 154h3v1h-3zM52 154h3v1h-3zM56 154h2v1h-2zM80 154h3v1h-3zM84 154h3v1h-3zM88 154h2v1h-2zM18 155h7v1h-7zM50 155h7v1h-7zM82 155h7v1h-7zM20 156h1v1h-1zM22 156h3v1h-3zM52 156h1v1h-1zM54 156h3v1h-3zM84 156h1v1h-1zM86 156h3v1h-3zM22 157h2v1h-2zM54 157h2v1h-2zM86 157h2v1h-2z"/></svg>
<span class="t" style="left:951.54px;top:635.93px;font:normal 13px/1 'Liberation Sans', sans-serif;color:#15120f;transform:scaleX(0.8632);transform-origin:left top;-webkit-text-stroke:0.42px #15120f;">Canvas Size</span>
<svg style="left:1020px;top:631.6px" width="198" height="21.2" viewBox="1020 631.6 198 21.2"><rect x="1021.65" y="633.25" width="194.7" height="17.9" fill="#c0c1c7" stroke="#0b0b0b" stroke-width="1.3" stroke-dasharray="1.333 1.333"/></svg>
<span class="t" style="left:1022.84px;top:635.93px;font:normal 13px/1 'Liberation Sans', sans-serif;color:#15120f;transform:scaleX(1.0752);transform-origin:left top;-webkit-text-stroke:0.42px #15120f;">Portrait (tiny)</span>
<svg style="left:1200px;top:636px" width="14" height="12" viewBox="1200 636 14 12"><path d="M1203.6 639.4L1207.2 643.3L1210.8 639.4" fill="none" stroke="#15120f" stroke-width="1.5"/></svg>
<span class="t" style="left:1221.55px;top:635.93px;font:normal 13px/1 'Liberation Sans', sans-serif;color:#15120f;transform:scaleX(0.8535);transform-origin:left top;-webkit-text-stroke:0.42px #15120f;">90 × 160</span>
<svg style="left:951px;top:656.6px" width="108.8" height="27" viewBox="951 656.6 108.8 27"><rect x="952.65" y="658.25" width="105.5" height="23.7" fill="#c0c1c7" stroke="#0b0b0b" stroke-width="1.3" stroke-dasharray="1.333 1.333"/></svg>
<span class="t" style="left:953.54px;top:663.93px;font:normal 13px/1 'Liberation Sans', sans-serif;color:#15120f;transform:scaleX(0.9177);transform-origin:left top;-webkit-text-stroke:0.42px #15120f;">Is Animation</span>
<svg style="left:1024.4px;top:661.4px" width="32.6" height="17.2" viewBox="1024.4 661.4 32.6 17.2"><rect x="1026.1" y="663.1" width="29.2" height="13.8" rx="3" fill="#6e645b" stroke="#15120f" stroke-width="1.5"/><rect x="1026.1" y="663.1" width="14.076" height="13.8" rx="2.6" fill="#c9cacf" stroke="#15120f" stroke-width="1.5"/><path d="M1028.4 664.8H1037.88" stroke="#efeff2" stroke-width="1.4"/></svg>
<span class="t" style="left:1089.59px;top:663.93px;font:normal 13px/1 'Liberation Sans', sans-serif;color:#15120f;transform:scaleX(0.8924);transform-origin:right top;-webkit-text-stroke:0.42px #15120f;">0 Frames</span>
<div style="left:1064px;top:680.2px;width:80.8px;height:1.9px;background:#b8c4d5;"></div>
<span class="t" style="left:1212.28px;top:663.93px;font:normal 13px/1 'Liberation Sans', sans-serif;color:#15120f;transform:scaleX(0.7612);transform-origin:right top;-webkit-text-stroke:0.42px #15120f;">0 FPS</span>
<div style="left:1168px;top:680.2px;width:81px;height:1.9px;background:#b8c4d5;"></div>
<svg style="left:1147.8px;top:656px" width="12" height="26" viewBox="1147.8 656 12 26"><path d="M1150.2 664.6L1153.8 660.4L1157.4 664.6" fill="none" stroke="#15120f" stroke-width="1.7"/><path d="M1150.2 673.2L1153.8 677.4L1157.4 673.2" fill="none" stroke="#a59d96" stroke-width="1.7"/></svg>
<svg style="left:1252px;top:656px" width="12" height="26" viewBox="1252 656 12 26"><path d="M1254.4 664.6L1258 660.4L1261.6 664.6" fill="none" stroke="#15120f" stroke-width="1.7"/><path d="M1254.4 673.2L1258 677.4L1261.6 673.2" fill="none" stroke="#a59d96" stroke-width="1.7"/></svg>
<svg style="left:951px;top:687px" width="317.4" height="22" viewBox="951 687 317.4 22"><rect x="952.65" y="688.65" width="314.1" height="18.7" fill="#c0c1c7" stroke="#0b0b0b" stroke-width="1.3" stroke-dasharray="1.333 1.333"/></svg>
<span class="t" style="left:1044.58px;top:692.33px;font:normal 13px/1 'Liberation Sans', sans-serif;color:#15120f;transform:scaleX(0.6992);transform-origin:center top;-webkit-text-stroke:0.42px #15120f;">EXPORT AS PNG...</span>
<span class="t" style="left:1065.51px;top:687.45px;font:normal 14px/1 'Liberation Sans', sans-serif;color:#f4f1ee;transform:scaleX(0.8889);transform-origin:left top;-webkit-text-stroke:2.2px #4a4642;paint-order:stroke fill;">Playtest Version 03B (January 2025)</span>
<div style="left:1272px;top:703.4px;width:6.67px;height:15.3px;background:#c0c1c7;"></div>
<div style="left:1266.4px;top:712px;width:12.3px;height:6.67px;background:#c0c1c7;"></div>
<div style="left:1265.2px;top:712px;width:1.3px;height:6.67px;background:#0b0b0b;"></div>
<div style="left:1272px;top:702.2px;width:6.67px;height:1.3px;background:#0b0b0b;"></div>
<div style="left:497.33px;top:704px;width:6.67px;height:14.67px;background:#c0c1c7;"></div>
<div style="left:497.33px;top:712px;width:12.6px;height:6.67px;background:#c0c1c7;"></div>
<div style="left:497.33px;top:702.8px;width:6.67px;height:1.3px;background:#0b0b0b;"></div>
<div style="left:509.9px;top:712px;width:1.3px;height:6.67px;background:#0b0b0b;"></div>
</div></body></html>
